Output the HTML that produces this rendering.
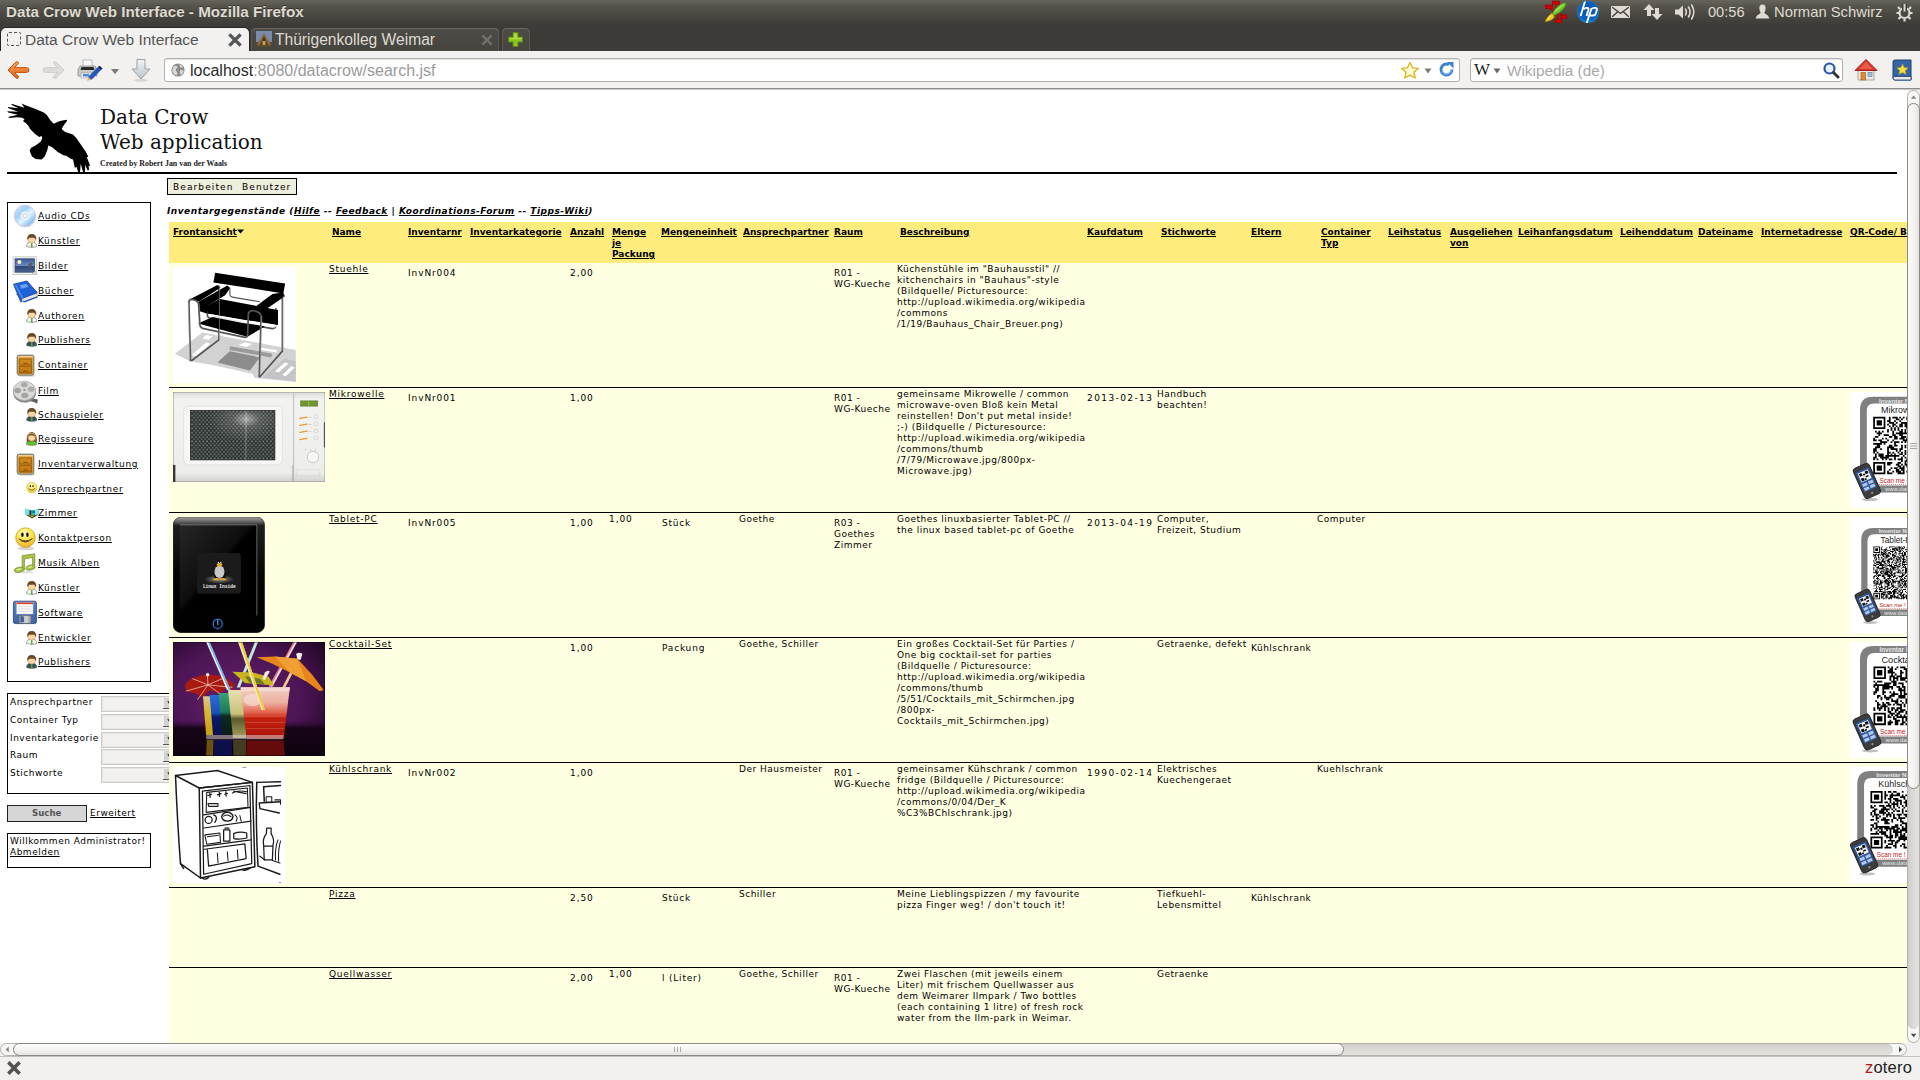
<!DOCTYPE html>
<html lang="de"><head><meta charset="utf-8"><title>Data Crow Web Interface - Mozilla Firefox</title>
<style>
html,body{margin:0;padding:0}
body{width:1920px;height:1080px;overflow:hidden;position:relative;background:#fff;font-family:"DejaVu Sans","Liberation Sans",sans-serif}
.a{position:absolute;white-space:nowrap}
.ui{font-family:"Liberation Sans",sans-serif}
/* page text */
.t{position:absolute;white-space:nowrap;font-size:9px;line-height:11px;letter-spacing:.5px;color:#000}
.h{position:absolute;white-space:nowrap;font-size:9px;line-height:11px;font-weight:bold;color:#000;text-decoration:underline}
.u{text-decoration:underline}
.ln{position:absolute;left:169px;width:1738px;height:1px;background:#000}
svg{position:absolute;display:block;overflow:hidden}
#all{position:absolute;left:0;top:0;width:1920px;height:1080px;overflow:hidden}
</style></head><body><div id="all">
<!-- ===== window chrome ===== -->
<div class="a" style="left:0;top:0;width:1920px;height:51px;background:linear-gradient(#67655b 0,#56544c 6px,#47463f 16px,#3d3c38 25px,#3c3b37 27px,#3c3b37 51px)"></div>
<div class="a ui" style="left:6px;top:3px;font-size:15.2px;line-height:18px;font-weight:bold;color:#dfdbd2;text-shadow:0 -1px 0 rgba(0,0,0,.4)">Data Crow Web Interface - Mozilla Firefox</div>
<!-- tray -->
<svg style="left:1543px;top:0" width="27" height="24" viewBox="0 0 27 24">
 <g stroke="#c80000" stroke-width="1.6" fill="none"><path d="M12.9 4 V12.4 M6.5 8.5 L14 12.4 L19.5 15 M14 12.4 L15.5 19.5"/></g>
 <g fill="#d80000" stroke="#a00000" stroke-width=".7"><rect x="9.3" y="1.1" width="7.1" height="3.1"/><rect x="2.4" y="5.1" width="6.9" height="3.5"/><rect x="17.9" y="15" width="5.8" height="3.5"/><rect x="12.3" y="19.3" width="6.4" height="3.4"/></g>
 <ellipse cx="16.3" cy="9" rx="9" ry="2.9" transform="rotate(-41.5 16.3 9)" fill="#6cc22c" stroke="#3c7a14" stroke-width=".7"/>
 <ellipse cx="16" cy="8.2" rx="7" ry="1.2" transform="rotate(-41.5 16 8.2)" fill="#a4e45c" opacity=".8"/>
 <path d="M8.6 13.2 Q11.2 14.4 11.4 17 Q9.5 20.6 2 21.8 Q3.4 17.2 8.6 13.2Z" fill="#f2c818" stroke="#a8800c" stroke-width=".6"/>
 <path d="M7.5 15.5 L4.5 20" stroke="#fff3a8" stroke-width=".9"/>
</svg>
<svg style="left:1576px;top:0" width="24" height="24" viewBox="0 0 24 24">
 <defs><radialGradient id="hpg" cx=".5" cy=".45" r=".6"><stop offset="0" stop-color="#0a4fb0"/><stop offset=".7" stop-color="#0a62c0"/><stop offset="1" stop-color="#1a9ae8"/></radialGradient><clipPath id="hpc"><circle cx="12" cy="12" r="10.9"/></clipPath></defs>
 <circle cx="12" cy="12" r="10.9" fill="url(#hpg)"/>
 <g clip-path="url(#hpc)" fill="none" stroke="#fff" stroke-width="1.9"><path d="M9.4 0 L4.6 16 M7.4 9.4 Q9 7.7 11.3 7.9 Q12.8 8.1 12.3 9.9 L10.5 16"/><path d="M15.6 8 L10.4 24 M15 9.4 Q16.6 7.7 19.3 7.9 Q21.3 8.1 20.8 10 L19.8 13.5 Q19.2 15.5 17.2 15.5 L13.6 15.5"/></g>
</svg>
<svg style="left:1610px;top:5px" width="21" height="14" viewBox="0 0 21 14"><rect x="1" y="1" width="19" height="12" rx="1" fill="#dfdbd2"/><path d="M2.2 2.2 L10.5 8.4 L18.8 2.2 M2.2 11.8 L8 6.6 M18.8 11.8 L13 6.6" stroke="#3c3b37" stroke-width="1.3" fill="none"/></svg>
<svg style="left:1643px;top:3px" width="20" height="18" viewBox="0 0 20 18"><path d="M6 1 L11.5 7 H8 V13 H4 V7 H0.5Z M14 17 L8.5 11 H12 V5 H16 V11 H19.5Z" fill="#dfdbd2"/></svg>
<svg style="left:1674px;top:3px" width="23" height="18" viewBox="0 0 23 18"><path d="M1 6.5 H4.5 L9 2.5 V15.5 L4.5 11.5 H1Z" fill="#dfdbd2"/><path d="M11.5 6 Q13.2 9 11.5 12 M14.5 4 Q17.6 9 14.5 14 M17.6 2 Q22 9 17.6 16" stroke="#dfdbd2" stroke-width="1.5" fill="none" stroke-linecap="round"/></svg>
<div class="a ui" style="left:1708px;top:3px;font-size:14.6px;line-height:18px;color:#dfdbd2">00:56</div>
<svg style="left:1755px;top:4px" width="15" height="15" viewBox="0 0 15 15"><path d="M7.5 0.5 C10 .5 11 2.6 10.6 5 C10.3 7 9.6 8 9.3 8.8 C10 10.4 13.6 10.6 14.4 14.5 H0.6 C1.4 10.6 5 10.4 5.7 8.8 C5.4 8 4.7 7 4.4 5 C4 2.6 5 .5 7.5 .5Z" fill="#dfdbd2"/></svg>
<div class="a ui" style="left:1774px;top:3px;font-size:14.8px;line-height:18px;color:#dfdbd2">Norman Schwirz</div>
<svg style="left:1895px;top:3px" width="19" height="19" viewBox="0 0 19 19"><g stroke="#dfdbd2" fill="none"><circle cx="9.5" cy="10" r="5" stroke-width="2.2"/><path d="M9.5 1.2 V8" stroke="#3c3b37" stroke-width="5"/><path d="M9.5 1 V8.5" stroke-width="2"/><path d="M3 4 L5 6 M16 4 L14 6 M1.5 10 H4 M17.5 10 H15 M3.5 16 L5.5 14 M15.5 16 L13.5 14 M9.5 18.5 V16" stroke-width="2.2"/></g></svg>

<!-- tabs -->
<div class="a" style="left:1px;top:28px;width:248px;height:24px;background:#f2f1f0;border-radius:5px 5px 0 0;box-shadow:0 0 0 1px rgba(0,0,0,.35)"></div>
<div class="a" style="left:7px;top:32px;width:12px;height:12px;border:1px dashed #555;border-radius:2px"></div>
<div class="a ui" style="left:25px;top:31px;font-size:15.5px;line-height:18px;color:#555">Data Crow Web Interface</div>
<svg style="left:228px;top:33px" width="14" height="14" viewBox="0 0 14 14"><path d="M2.6 2.6 L11.4 11.4 M11.4 2.6 L2.6 11.4" stroke="#555" stroke-width="3.4" stroke-linecap="square"/></svg>
<div class="a" style="left:251px;top:28px;width:248px;height:23px;background:linear-gradient(#4d4c47,#45443f);border-radius:5px 5px 0 0;box-shadow:inset 0 1px 0 #6a6863,inset 1px 0 0 #5c5a55,inset -1px 0 0 #5c5a55"></div>
<svg style="left:256px;top:31px" width="16" height="16" viewBox="0 0 16 16"><rect width="16" height="16" fill="#7a8cae"/><rect y="11" width="16" height="5" fill="#5a4a30"/><path d="M1 14 L8 1.5 L15 14Z" fill="#8a6a3a"/><path d="M4 14 L8 5 L12 14Z" fill="#4a3520"/><rect x="6.5" y="10" width="3" height="4" fill="#c8a050"/></svg>
<div class="a ui" style="left:275px;top:31px;font-size:15.6px;line-height:18px;color:#dfdbd2">Thürigenkolleg Weimar</div>
<svg style="left:480px;top:33px" width="14" height="14" viewBox="0 0 14 14"><path d="M3 3 L11 11 M11 3 L3 11" stroke="#75736d" stroke-width="2.4" stroke-linecap="round"/></svg>
<div class="a" style="left:502px;top:28px;width:28px;height:23px;background:linear-gradient(#4d4c47,#45443f);border-radius:5px 5px 0 0;box-shadow:inset 0 1px 0 #6a6863,inset 1px 0 0 #5c5a55,inset -1px 0 0 #5c5a55"></div>
<svg style="left:507px;top:31px" width="17" height="17" viewBox="0 0 17 17"><path d="M6 1.5 H11 V6 H15.5 V11 H11 V15.5 H6 V11 H1.5 V6 H6Z" fill="#8fc321" stroke="#5c8a10" stroke-width="1"/><path d="M7 2.5 H10 V7 H14.5 V8.2 H2.5 V7 H7Z" fill="#b6e04a" opacity=".8"/></svg>

<!-- nav bar -->
<div class="a" style="left:0;top:51px;width:1920px;height:37px;background:#f2f1f0"></div>
<div class="a" style="left:0;top:88px;width:1920px;height:1px;background:#8f8d89"></div>
<div class="a" style="left:0;top:89px;width:1920px;height:1px;background:#c9c7c4"></div>
<!-- back -->
<svg style="left:6px;top:60px" width="24" height="20" viewBox="0 0 24 20"><defs><linearGradient id="bk" x1="0" y1="0" x2="0" y2="1"><stop offset="0" stop-color="#f6a65c"/><stop offset="1" stop-color="#e2601a"/></linearGradient></defs><path d="M2 10 L10 2 Q11.8 1 12.6 2.6 L12 4 L8.6 7.6 H20.5 Q23 7.8 23 10 Q23 12.2 20.5 12.4 H8.6 L12 16 L12.6 17.4 Q11.8 19 10 18Z" fill="url(#bk)" stroke="#c4500f" stroke-width="1" stroke-linejoin="round"/></svg>
<svg style="left:42px;top:60px" width="24" height="20" viewBox="0 0 24 20"><path d="M22 10 L14 2 Q12.2 1 11.4 2.6 L12 4 L15.4 7.6 H3.5 Q1 7.8 1 10 Q1 12.2 3.5 12.4 H15.4 L12 16 L11.4 17.4 Q12.2 19 14 18Z" fill="#dedcd8" stroke="#cfcdc8" stroke-width="1" stroke-linejoin="round"/></svg>
<!-- printer + pencil -->
<svg style="left:77px;top:58px" width="26" height="24" viewBox="0 0 26 24">
 <path d="M6 2 H15 V9 H6Z" fill="#fafafa" stroke="#aaa" stroke-width=".8"/>
 <path d="M3 8 H18 L20 12 V18 H1 V12Z" fill="#c9c9c6" stroke="#8a8a88" stroke-width=".8"/>
 <path d="M4.5 9 H16.5 L17.5 12 H3.5Z" fill="#2a2a2a"/>
 <rect x="4" y="15" width="13" height="5" fill="#eee" stroke="#999" stroke-width=".6"/>
 <rect x="6" y="16" width="6" height="2.5" fill="#4a8ad8"/>
 <path d="M22.5 8 L25 10.5 L14 21.5 L11.5 19Z" fill="#2456c8" stroke="#143a8a" stroke-width=".8"/>
 <path d="M11.5 19 L14 21.5 L10 23Z" fill="#e8b070"/><path d="M22.5 8 L25 10.5 L24 11.5 L21.5 9Z" fill="#222"/>
</svg>
<svg style="left:110px;top:68px" width="10" height="7" viewBox="0 0 10 7"><path d="M1 1 H9 L5 6.2Z" fill="#7a7a78"/></svg>
<svg style="left:130px;top:58px" width="22" height="24" viewBox="0 0 22 24"><defs><linearGradient id="dn" x1="0" y1="0" x2="0" y2="1"><stop offset="0" stop-color="#f4f6f7"/><stop offset="1" stop-color="#b9c2c8"/></linearGradient></defs><ellipse cx="11" cy="22.3" rx="7" ry="1.4" fill="#000" opacity=".12"/><path d="M7 1.5 H15 V11 H20 L11 21 L2 11 H7Z" fill="url(#dn)" stroke="#9aa0a4" stroke-width="1" stroke-linejoin="round"/></svg>
<!-- url bar -->
<div class="a" style="left:164px;top:58px;width:1294px;height:22px;background:#fff;border:1px solid #b4b0aa;border-radius:3px;box-shadow:inset 0 1px 1px rgba(0,0,0,.12)"></div>
<svg style="left:170px;top:62px" width="16" height="16" viewBox="0 0 16 16"><circle cx="8" cy="8" r="6.6" fill="#8e8e8c"/><path d="M3 5 Q5 3 7 4 Q8 6 6 7 Q5 9 7 10 Q8 12 6.5 13.5 Q3 12 2.2 9Z M9.5 2.2 Q12 3 13 5 Q11 6 10 5Z M10 8 Q12 7.5 13.8 9 Q13 12 11 13 Q9.5 11 10 8Z" fill="#d8d8d6"/></svg>
<div class="a ui" style="left:190px;top:61px;font-size:16px;line-height:20px;color:#9a9a9a"><span style="color:#2a2a2a">localhost</span>:8080/datacrow/search.jsf</div>
<svg style="left:1400px;top:61px" width="20" height="18" viewBox="0 0 20 18"><path d="M10 1.5 L12.5 6.8 L18.3 7.4 L14 11.3 L15.2 17 L10 14.1 L4.8 17 L6 11.3 L1.7 7.4 L7.5 6.8Z" fill="#fffbd6" stroke="#d8b41c" stroke-width="1.3" stroke-linejoin="round"/></svg>
<svg style="left:1424px;top:68px" width="8" height="6" viewBox="0 0 8 6"><path d="M.5 .5 H7.5 L4 5.5Z" fill="#7a7a78"/></svg>
<svg style="left:1438px;top:61px" width="17" height="17" viewBox="0 0 17 17"><path d="M14 8.5 A5.5 5.5 0 1 1 11 3.6" fill="none" stroke="#3b82d2" stroke-width="3"/><path d="M9 1 H15.5 V7.5Z" fill="#3b82d2"/><path d="M13.4 8.5 A4.9 4.9 0 0 1 4 10" fill="none" stroke="#7fb4ea" stroke-width="1.2"/></svg>
<!-- search bar -->
<div class="a" style="left:1470px;top:58px;width:371px;height:22px;background:#fff;border:1px solid #b4b0aa;border-radius:3px;box-shadow:inset 0 1px 1px rgba(0,0,0,.12)"></div>
<div class="a" style="left:1474px;top:60px;font-family:'Liberation Serif',serif;font-size:17px;line-height:20px;color:#222;letter-spacing:-1px">W</div>
<svg style="left:1493px;top:68px" width="8" height="6" viewBox="0 0 8 6"><path d="M.5 .5 H7.5 L4 5.5Z" fill="#6a6a68"/></svg>
<div class="a ui" style="left:1507px;top:61px;font-size:15.3px;line-height:20px;color:#a9a9a9">Wikipedia (de)</div>
<svg style="left:1822px;top:61px" width="18" height="18" viewBox="0 0 18 18"><circle cx="7.5" cy="7.5" r="5" fill="#e8f0fa" stroke="#2b55a8" stroke-width="2.2"/><path d="M11.5 11.5 L16 16" stroke="#333" stroke-width="3" stroke-linecap="round"/></svg>
<!-- home -->
<svg style="left:1854px;top:58px" width="24" height="24" viewBox="0 0 24 24"><path d="M4 12 H20 V22 H4Z" fill="#eceae6" stroke="#9a9894" stroke-width=".8"/><path d="M12 1.5 L23 12.5 H1Z" fill="#d8382a" stroke="#a01e14" stroke-width="1" stroke-linejoin="round"/><path d="M12 4 L19 11 H5Z" fill="#ef6a52" opacity=".7"/><rect x="7" y="14.5" width="4.5" height="7.5" fill="#e08a2a" stroke="#9a5a10" stroke-width=".6"/><rect x="14" y="14.5" width="4" height="4" fill="#9ec2e8" stroke="#5a7a9a" stroke-width=".6"/></svg>
<svg style="left:1891px;top:59px" width="22" height="23" viewBox="0 0 22 23"><path d="M2 3 Q2 1 4 1 H20 V21 H4 Q2 21 2 19Z" fill="#3465a4" stroke="#1f3f70" stroke-width="1"/><path d="M2 19 Q2 17.5 4 17.5 H20 V21 H4 Q2 21 2 19Z" fill="#e8e8e8" stroke="#1f3f70" stroke-width=".8"/><path d="M11.5 5 L13.2 8.6 L17.2 9 L14.2 11.6 L15.1 15.5 L11.5 13.4 L7.9 15.5 L8.8 11.6 L5.8 9 L9.8 8.6Z" fill="#f8e040" stroke="#b89a10" stroke-width=".6"/></svg>
<!-- ===== page ===== -->
<svg style="left:0;top:98px" width="100" height="74" viewBox="0 0 1350 999"><path d="M290 75 L345 98 L480 150 L590 195 L630 225 L680 300 L725 348 L800 315 L860 300 L905 293 L905 312 L865 360 L832 420 L880 458 L985 492 L1030 540 L1100 640 L1160 730 L1192 792 L1172 800 L1216 912 L1196 920 L1202 972 L1180 976 L1152 900 L1146 1000 L1120 996 L1090 888 L1080 1000 L1052 996 L1036 930 L1010 942 L986 830 L960 822 L900 782 L850 770 L780 730 L700 662 L652 640 L640 700 L604 790 L560 830 L480 822 L432 790 L400 712 L420 672 L480 640 L548 590 L572 540 L560 514 L530 526 L470 482 L410 422 L380 372 L352 342 L310 312 L332 286 L300 266 L230 260 L130 270 L108 256 L240 225 L110 196 L98 180 L245 185 L110 136 L108 120 L250 140 L150 92 L165 82 L330 130Z" fill="#000"/></svg>

<div class="a" style="left:100px;top:105px;font-family:'DejaVu Serif','Liberation Serif',serif;font-size:20px;line-height:25.4px;color:#111">Data Crow<br>Web application</div>
<div class="a" style="left:100px;top:159px;font-family:'Liberation Serif',serif;font-weight:bold;font-size:7.9px;line-height:10px;color:#222">Created by Robert Jan van der Waals</div>
<div class="a" style="left:7px;top:172px;width:1890px;height:2px;background:#000"></div>
<div class="a" style="left:167px;top:178px;width:128px;height:15px;background:#eeeedd;border:1px solid #000"></div>
<div class="t" style="left:173px;top:182px;letter-spacing:1.1px;font-size:9px">Bearbeiten</div>
<div class="t" style="left:242px;top:182px;letter-spacing:1.1px;font-size:9px">Benutzer</div>
<div class="a" style="left:7px;top:202px;width:142px;height:478px;border:1px solid #000;background:#fff"></div>
<svg style="left:13px;top:204px" width="24" height="24" viewBox="0 0 24 24"><defs><linearGradient id="cdg" x1="0" y1="0" x2="1" y2="1"><stop offset="0" stop-color="#d8ecfb"/><stop offset=".35" stop-color="#9fd0f6"/><stop offset=".55" stop-color="#e8f5fe"/><stop offset=".8" stop-color="#8cc4f2"/><stop offset="1" stop-color="#c4e2fa"/></linearGradient></defs><ellipse cx="12.3" cy="13.2" rx="10.6" ry="10.4" fill="#000" opacity=".12"/><circle cx="12" cy="11.8" r="10.6" fill="url(#cdg)" stroke="#c9bfd8" stroke-width=".7"/><circle cx="12" cy="11.8" r="4.3" fill="#f4f9fd" stroke="#dbe6ee" stroke-width=".6"/><rect x="10" y="9.8" width="4" height="4" rx="1.1" fill="#fff" stroke="#bcbcbc" stroke-width=".8"/></svg>
<div class="t u" style="left:38px;top:211px;letter-spacing:.66px">Audio CDs</div>
<svg style="left:25.5px;top:233.5px" width="11.5" height="14" viewBox="0 0 11.5 14"><path d="M.5 12.6 C.5 9.6 2.3 8.4 4.2 8.2 H7.3 C9.2 8.4 11 9.6 11 12.6 Q5.75 14.4 .5 12.6Z" fill="#f4f4f4" stroke="#6e6e6e" stroke-width=".6"/><path d="M5.15 8.8 H6.35 L6.6 13.2 H4.9Z" fill="#4caf28"/><ellipse cx="5.75" cy="5.1" rx="3.75" ry="4" fill="#fcd6a4" stroke="#c48a50" stroke-width=".5"/><path d="M1.7 5.4 C1.2 2 3.1 .3 5.75 .3 C8.4 .3 10.3 2 9.8 5.4 L9.1 3.9 Q7.6 3.1 5.75 3.5 Q3.9 3.1 2.4 3.9Z" fill="#6b4a22" stroke="#4a3214" stroke-width=".5"/></svg>
<div class="t u" style="left:38px;top:236px;letter-spacing:.66px">Künstler</div>
<svg style="left:12px;top:256px" width="26" height="20" viewBox="0 0 26 20"><defs><linearGradient id="img1" x1="0" y1="0" x2="0" y2="1"><stop offset="0" stop-color="#3a5a96"/><stop offset=".5" stop-color="#6a8ac0"/><stop offset=".55" stop-color="#2e4472"/><stop offset="1" stop-color="#4a6490"/></linearGradient></defs><rect x="1" y=".8" width="23.6" height="17.6" fill="#f2f2f0" stroke="#c4c4c0" stroke-width=".8"/><rect x="3" y="2.8" width="19.6" height="13.4" fill="url(#img1)" stroke="#26365a" stroke-width=".6"/><circle cx="7.4" cy="6" r="2" fill="#fbfbc8"/><path d="M15 11 L18.5 6.2 L20.5 7.2 L18.6 11.8Z" fill="#555a66"/><path d="M19.6 18.4 L24.6 14.2 V18.4Z" fill="#dadad6" stroke="#b4b4b0" stroke-width=".5"/></svg>
<div class="t u" style="left:38px;top:261px;letter-spacing:.66px">Bilder</div>
<svg style="left:12px;top:280px" width="27" height="23" viewBox="0 0 27 23"><path d="M4 14 L12 21.5 L25.5 16.5 L25 13 L11 18Z" fill="#e8e4dc" stroke="#8a8a86" stroke-width=".6"/><path d="M9 21.8 L12.3 22.6 L25.8 17.6 L25.5 16.3 L12 21.3Z" fill="#1a50c0"/><path d="M1.5 4.2 L15 1 L25.3 12.6 L10.6 18.2 Q8.8 19.6 9.6 21.8 L8.6 21.6 Z" fill="#1f62d8" stroke="#0f3fa0" stroke-width=".8" stroke-linejoin="round"/><path d="M2.4 4.8 L4.2 4.4 L11.5 18.2 L10 19Z" fill="#4d8af0"/><path d="M7.5 5.4 L14 3.8 L16.6 6.8 L9.6 8.8Z" fill="#6aa2f4"/></svg>
<div class="t u" style="left:38px;top:286px;letter-spacing:.66px">Bücher</div>
<svg style="left:25.5px;top:308.5px" width="11.5" height="14" viewBox="0 0 11.5 14"><path d="M.5 12.6 C.5 9.6 2.3 8.4 4.2 8.2 H7.3 C9.2 8.4 11 9.6 11 12.6 Q5.75 14.4 .5 12.6Z" fill="#f4f4f4" stroke="#6e6e6e" stroke-width=".6"/><path d="M5.15 8.8 H6.35 L6.6 13.2 H4.9Z" fill="#4caf28"/><ellipse cx="5.75" cy="5.1" rx="3.75" ry="4" fill="#fcd6a4" stroke="#c48a50" stroke-width=".5"/><path d="M1.7 5.4 C1.2 2 3.1 .3 5.75 .3 C8.4 .3 10.3 2 9.8 5.4 L9.1 3.9 Q7.6 3.1 5.75 3.5 Q3.9 3.1 2.4 3.9Z" fill="#6b4a22" stroke="#4a3214" stroke-width=".5"/></svg>
<div class="t u" style="left:38px;top:311px;letter-spacing:.66px">Authoren</div>
<svg style="left:25.5px;top:332.5px" width="11.5" height="14" viewBox="0 0 11.5 14"><path d="M.5 12.6 C.5 9.6 2.3 8.4 4.2 8.2 H7.3 C9.2 8.4 11 9.6 11 12.6 Q5.75 14.4 .5 12.6Z" fill="#3c4a5a" stroke="#6e6e6e" stroke-width=".6"/><path d="M5.15 8.8 H6.35 L6.6 13.2 H4.9Z" fill="#4caf28"/><ellipse cx="5.75" cy="5.1" rx="3.75" ry="4" fill="#fcd6a4" stroke="#c48a50" stroke-width=".5"/><path d="M1.7 5.4 C1.2 2 3.1 .3 5.75 .3 C8.4 .3 10.3 2 9.8 5.4 L9.1 3.9 Q7.6 3.1 5.75 3.5 Q3.9 3.1 2.4 3.9Z" fill="#6b4a22" stroke="#4a3214" stroke-width=".5"/></svg>
<div class="t u" style="left:38px;top:335px;letter-spacing:.66px">Publishers</div>
<svg style="left:16px;top:354px" width="20" height="23" viewBox="0 0 20 23"><defs><linearGradient id="drw368" x1="0" y1="0" x2="0" y2="1"><stop offset="0" stop-color="#f0c070"/><stop offset=".12" stop-color="#d18a1e"/><stop offset="1" stop-color="#bd7510"/></linearGradient></defs><ellipse cx="10.5" cy="21.6" rx="9" ry="1.2" fill="#000" opacity=".18"/><rect x="1.2" y="1.2" width="16.6" height="19.8" rx="1.8" fill="#e8dcb8" stroke="#5a5238" stroke-width=".9"/><rect x="2.3" y="2.6" width="14.4" height="17.4" rx=".8" fill="url(#drw368)"/><rect x="3.6" y="5" width="11.8" height="6" fill="none" stroke="#9a5c08" stroke-width=".8"/><rect x="3.6" y="12.6" width="11.8" height="6" fill="none" stroke="#9a5c08" stroke-width=".8"/><path d="M7.3 10 Q9.5 8.2 11.7 10 M7.3 17.6 Q9.5 15.8 11.7 17.6" stroke="#7a4604" stroke-width=".9" fill="none"/></svg>
<div class="t u" style="left:38px;top:360px;letter-spacing:.66px">Container</div>
<svg style="left:12px;top:380px" width="27" height="24" viewBox="0 0 27 24"><path d="M14 20 Q20 18 25.8 19.4 L25.2 23.8 Q20 19.6 14 22.4Z" fill="#5e5e5c"/><ellipse cx="12.6" cy="12.4" rx="11.4" ry="10.4" fill="#8c8c8a"/><ellipse cx="12.4" cy="10.8" rx="11.2" ry="9.6" fill="#d9dad6" stroke="#a3a4a0" stroke-width=".7"/><ellipse cx="12.2" cy="4.8" rx="3.4" ry="2.5" fill="#a9aaa6"/><ellipse cx="5.6" cy="10.4" rx="3.4" ry="2.7" fill="#a3a4a0"/><ellipse cx="19" cy="9.2" rx="3.3" ry="2.6" fill="#adaeaa"/><ellipse cx="12.8" cy="15.4" rx="3.6" ry="2.7" fill="#a3a4a0"/><ellipse cx="12.4" cy="10" rx="1.3" ry="1" fill="#8a8a88"/></svg>
<div class="t u" style="left:38px;top:386px;letter-spacing:.66px">Film</div>
<svg style="left:25.5px;top:407.5px" width="11.5" height="14" viewBox="0 0 11.5 14"><path d="M.5 12.6 C.5 9.6 2.3 8.4 4.2 8.2 H7.3 C9.2 8.4 11 9.6 11 12.6 Q5.75 14.4 .5 12.6Z" fill="#3c4a5a" stroke="#6e6e6e" stroke-width=".6"/><path d="M5.15 8.8 H6.35 L6.6 13.2 H4.9Z" fill="#4caf28"/><ellipse cx="5.75" cy="5.1" rx="3.75" ry="4" fill="#fcd6a4" stroke="#c48a50" stroke-width=".5"/><path d="M1.7 5.4 C1.2 2 3.1 .3 5.75 .3 C8.4 .3 10.3 2 9.8 5.4 L9.1 3.9 Q7.6 3.1 5.75 3.5 Q3.9 3.1 2.4 3.9Z" fill="#6b4a22" stroke="#4a3214" stroke-width=".5"/></svg>
<div class="t u" style="left:38px;top:410px;letter-spacing:.66px">Schauspieler</div>
<svg style="left:25.5px;top:431.5px" width="11.5" height="14" viewBox="0 0 11.5 14"><path d="M.5 12.6 C.5 9.6 2.3 8.4 4.2 8.2 H7.3 C9.2 8.4 11 9.6 11 12.6 Q5.75 14.4 .5 12.6Z" fill="#58c428" stroke="#6e6e6e" stroke-width=".6"/><path d="M5.15 8.8 H6.35 L6.6 13.2 H4.9Z" fill="#58c428"/><path d="M1.2 10 C.4 3.6 2.6 .4 5.75 .4 C8.9 .4 11.1 3.6 10.3 10 L8.6 9 L2.9 9Z" fill="#7a5426" stroke="#4a3214" stroke-width=".5"/><ellipse cx="5.75" cy="5.1" rx="3.75" ry="4" fill="#fcd6a4" stroke="#c48a50" stroke-width=".5"/><path d="M2.2 5.2 C2.4 2.6 4 1.5 5.75 1.5 C7.5 1.5 9.1 2.6 9.3 5.2 C8.4 3.7 7 3.4 5.75 3.4 C4.5 3.4 3.1 3.7 2.2 5.2Z" fill="#7a5426"/></svg>
<div class="t u" style="left:38px;top:434px;letter-spacing:.66px">Regisseure</div>
<svg style="left:16px;top:453px" width="20" height="23" viewBox="0 0 20 23"><defs><linearGradient id="drw467" x1="0" y1="0" x2="0" y2="1"><stop offset="0" stop-color="#f0c070"/><stop offset=".12" stop-color="#d18a1e"/><stop offset="1" stop-color="#bd7510"/></linearGradient></defs><ellipse cx="10.5" cy="21.6" rx="9" ry="1.2" fill="#000" opacity=".18"/><rect x="1.2" y="1.2" width="16.6" height="19.8" rx="1.8" fill="#e8dcb8" stroke="#5a5238" stroke-width=".9"/><rect x="2.3" y="2.6" width="14.4" height="17.4" rx=".8" fill="url(#drw467)"/><rect x="3.6" y="5" width="11.8" height="6" fill="none" stroke="#9a5c08" stroke-width=".8"/><rect x="3.6" y="12.6" width="11.8" height="6" fill="none" stroke="#9a5c08" stroke-width=".8"/><path d="M7.3 10 Q9.5 8.2 11.7 10 M7.3 17.6 Q9.5 15.8 11.7 17.6" stroke="#7a4604" stroke-width=".9" fill="none"/></svg>
<div class="t u" style="left:38px;top:459px;letter-spacing:.66px">Inventarverwaltung</div>
<svg style="left:25.5px;top:482.4px" width="12" height="12" viewBox="0 0 12 12"><defs><radialGradient id="sms" cx=".45" cy=".3" r=".75"><stop offset="0" stop-color="#fffdc8"/><stop offset=".6" stop-color="#fbe858"/><stop offset="1" stop-color="#f0c23a"/></radialGradient></defs><circle cx="5.8" cy="5.6" r="5.1" fill="url(#sms)" stroke="#cdb02a" stroke-width=".6"/><ellipse cx="4.3" cy="4.2" rx=".7" ry="1.1" fill="#222"/><ellipse cx="7" cy="4.2" rx=".7" ry="1.1" fill="#222"/><path d="M2.6 6.4 Q5.8 10 9 6.3" fill="none" stroke="#5a4a1a" stroke-width=".9"/></svg>
<div class="t u" style="left:38px;top:484px;letter-spacing:.66px">Ansprechpartner</div>
<svg style="left:24.5px;top:508px" width="14" height="11" viewBox="0 0 14 11"><path d="M.4 .6 L4 2 H10 L13.6 .6 V6.6 L10 7 H4 L.4 6.6Z" fill="#2ab4b8"/><path d="M.4 .6 L4 2 V7 L.4 6.6Z" fill="#7adfe0"/><path d="M13.6 .6 L10 2 V7 L13.6 6.6Z" fill="#8ae6e6"/><rect x="4.6" y="2.6" width="1.6" height="4.2" fill="#5a1a1a"/><rect x="7.6" y="3" width="2" height="2" fill="#16686a"/><path d="M.8 6.8 L4 7 H10 L13.2 6.8 L7 10.6Z" fill="#4a4a1e"/><path d="M4.4 7.6 H9.6 L7 9.6Z" fill="#b4a83a"/></svg>
<div class="t u" style="left:38px;top:508px;letter-spacing:.66px">Zimmer</div>
<svg style="left:14px;top:526px" width="24" height="26" viewBox="0 0 24 26"><defs><radialGradient id="smg" cx=".45" cy=".28" r=".75"><stop offset="0" stop-color="#fffcc0"/><stop offset=".5" stop-color="#fbe64a"/><stop offset="1" stop-color="#f2a52a"/></radialGradient></defs><ellipse cx="11.8" cy="22.4" rx="8.6" ry="1.8" fill="#000" opacity=".16"/><circle cx="11.5" cy="11.6" r="9.8" fill="url(#smg)" stroke="#c2a41c" stroke-width=".8"/><ellipse cx="8.4" cy="8.8" rx="1.25" ry="2.2" fill="#111"/><ellipse cx="13.4" cy="8.8" rx="1.25" ry="2.2" fill="#111"/><path d="M4.8 12.8 Q11 19.6 18.4 12.6 Q11.4 17 4.8 12.8Z" fill="#5a4a1a" stroke="#5a4a1a" stroke-width=".8" stroke-linejoin="round"/></svg>
<div class="t u" style="left:38px;top:533px;letter-spacing:.66px">Kontaktperson</div>
<svg style="left:13px;top:553px" width="24" height="21" viewBox="0 0 24 21"><ellipse cx="12" cy="19.2" rx="9" ry="1.3" fill="#000" opacity=".12"/><path d="M9.2 2.6 L21.8 .8 V15 H19.6 V4.6 L11.4 5.8 V17 H9.2Z" fill="#a9c24a" stroke="#7e962c" stroke-width=".8" stroke-linejoin="round"/><ellipse cx="6.2" cy="16.8" rx="5" ry="2.5" transform="rotate(-12 6.2 16.8)" fill="#a9c24a" stroke="#7e962c" stroke-width=".8"/><ellipse cx="17.4" cy="14.6" rx="4.6" ry="2.4" transform="rotate(-12 17.4 14.6)" fill="#a9c24a" stroke="#7e962c" stroke-width=".8"/><ellipse cx="5.6" cy="16.4" rx="2.8" ry="1" transform="rotate(-12 5.6 16.4)" fill="#d4e48e"/><ellipse cx="16.8" cy="14.2" rx="2.6" ry=".9" transform="rotate(-12 16.8 14.2)" fill="#d4e48e"/></svg>
<div class="t u" style="left:38px;top:558px;letter-spacing:.66px">Musik Alben</div>
<svg style="left:25.5px;top:580.5px" width="11.5" height="14" viewBox="0 0 11.5 14"><path d="M.5 12.6 C.5 9.6 2.3 8.4 4.2 8.2 H7.3 C9.2 8.4 11 9.6 11 12.6 Q5.75 14.4 .5 12.6Z" fill="#f4f4f4" stroke="#6e6e6e" stroke-width=".6"/><path d="M5.15 8.8 H6.35 L6.6 13.2 H4.9Z" fill="#4caf28"/><ellipse cx="5.75" cy="5.1" rx="3.75" ry="4" fill="#fcd6a4" stroke="#c48a50" stroke-width=".5"/><path d="M1.7 5.4 C1.2 2 3.1 .3 5.75 .3 C8.4 .3 10.3 2 9.8 5.4 L9.1 3.9 Q7.6 3.1 5.75 3.5 Q3.9 3.1 2.4 3.9Z" fill="#6b4a22" stroke="#4a3214" stroke-width=".5"/></svg>
<div class="t u" style="left:38px;top:583px;letter-spacing:.66px">Künstler</div>
<svg style="left:12px;top:600px" width="26" height="25" viewBox="0 0 26 25"><defs><linearGradient id="flp" x1="0" y1="0" x2="0" y2="1"><stop offset="0" stop-color="#5b84c8"/><stop offset="1" stop-color="#3c62a8"/></linearGradient><linearGradient id="flm" x1="0" y1="0" x2="1" y2="0"><stop offset="0" stop-color="#8c8c8a"/><stop offset=".6" stop-color="#d6d6d4"/><stop offset="1" stop-color="#9a9a98"/></linearGradient></defs><rect x="1.4" y="1.2" width="23" height="22.4" rx="1.8" fill="url(#flp)" stroke="#2e4c86" stroke-width=".9"/><rect x="4.6" y="2.6" width="16.4" height="11.4" fill="#f8f8f8" stroke="#c4c8d0" stroke-width=".4"/><rect x="4.6" y="2.6" width="16.4" height="1.5" fill="#e03a24"/><path d="M6.2 6.6 H19.4 M6.2 9 H19.4 M6.2 11.4 H19.4" stroke="#d2d2d2" stroke-width=".6"/><rect x="7" y="15.6" width="12" height="7.6" fill="url(#flm)" stroke="#666" stroke-width=".5"/><rect x="9" y="16.8" width="2.6" height="5" fill="#3c62b4" stroke="#24408a" stroke-width=".5"/></svg>
<div class="t u" style="left:38px;top:608px;letter-spacing:.66px">Software</div>
<svg style="left:25.5px;top:630.5px" width="11.5" height="14" viewBox="0 0 11.5 14"><path d="M.5 12.6 C.5 9.6 2.3 8.4 4.2 8.2 H7.3 C9.2 8.4 11 9.6 11 12.6 Q5.75 14.4 .5 12.6Z" fill="#f4f4f4" stroke="#6e6e6e" stroke-width=".6"/><path d="M5.15 8.8 H6.35 L6.6 13.2 H4.9Z" fill="#4caf28"/><ellipse cx="5.75" cy="5.1" rx="3.75" ry="4" fill="#fcd6a4" stroke="#c48a50" stroke-width=".5"/><path d="M1.7 5.4 C1.2 2 3.1 .3 5.75 .3 C8.4 .3 10.3 2 9.8 5.4 L9.1 3.9 Q7.6 3.1 5.75 3.5 Q3.9 3.1 2.4 3.9Z" fill="#6b4a22" stroke="#4a3214" stroke-width=".5"/></svg>
<div class="t u" style="left:38px;top:633px;letter-spacing:.66px">Entwickler</div>
<svg style="left:25.5px;top:654.5px" width="11.5" height="14" viewBox="0 0 11.5 14"><path d="M.5 12.6 C.5 9.6 2.3 8.4 4.2 8.2 H7.3 C9.2 8.4 11 9.6 11 12.6 Q5.75 14.4 .5 12.6Z" fill="#3c4a5a" stroke="#6e6e6e" stroke-width=".6"/><path d="M5.15 8.8 H6.35 L6.6 13.2 H4.9Z" fill="#4caf28"/><ellipse cx="5.75" cy="5.1" rx="3.75" ry="4" fill="#fcd6a4" stroke="#c48a50" stroke-width=".5"/><path d="M1.7 5.4 C1.2 2 3.1 .3 5.75 .3 C8.4 .3 10.3 2 9.8 5.4 L9.1 3.9 Q7.6 3.1 5.75 3.5 Q3.9 3.1 2.4 3.9Z" fill="#6b4a22" stroke="#4a3214" stroke-width=".5"/></svg>
<div class="t u" style="left:38px;top:657px;letter-spacing:.66px">Publishers</div>
<div class="a" style="left:7px;top:693px;width:170px;height:99px;border:1px solid #000;background:#fff"></div>
<div class="t" style="left:10px;top:697px">Ansprechpartner</div>
<div class="a" style="left:101px;top:696px;width:75px;height:14px;border:1px solid #cdccc9;background:#f2f1ef;box-shadow:inset 0 0 0 1px #e6e5e2"></div>
<div class="a" style="left:164px;top:698px;width:10px;height:10px;background:#d2d2d2"></div>
<div class="a" style="left:163px;top:708px;width:10px;height:1px;background:#555"></div>
<svg style="left:166.5px;top:701px" width="5" height="4" viewBox="0 0 5 4"><path d="M.3 .3 H4.7 L2.5 3.6Z" fill="#111"/></svg>
<div class="t" style="left:10px;top:715px">Container Typ</div>
<div class="a" style="left:101px;top:714px;width:75px;height:14px;border:1px solid #cdccc9;background:#f2f1ef;box-shadow:inset 0 0 0 1px #e6e5e2"></div>
<div class="a" style="left:164px;top:716px;width:10px;height:10px;background:#d2d2d2"></div>
<div class="a" style="left:163px;top:726px;width:10px;height:1px;background:#555"></div>
<svg style="left:166.5px;top:719px" width="5" height="4" viewBox="0 0 5 4"><path d="M.3 .3 H4.7 L2.5 3.6Z" fill="#111"/></svg>
<div class="t" style="left:10px;top:733px">Inventarkategorie</div>
<div class="a" style="left:101px;top:732px;width:75px;height:14px;border:1px solid #cdccc9;background:#f2f1ef;box-shadow:inset 0 0 0 1px #e6e5e2"></div>
<div class="a" style="left:164px;top:734px;width:10px;height:10px;background:#d2d2d2"></div>
<div class="a" style="left:163px;top:744px;width:10px;height:1px;background:#555"></div>
<svg style="left:166.5px;top:737px" width="5" height="4" viewBox="0 0 5 4"><path d="M.3 .3 H4.7 L2.5 3.6Z" fill="#111"/></svg>
<div class="t" style="left:10px;top:750px">Raum</div>
<div class="a" style="left:101px;top:749px;width:75px;height:14px;border:1px solid #cdccc9;background:#f2f1ef;box-shadow:inset 0 0 0 1px #e6e5e2"></div>
<div class="a" style="left:164px;top:751px;width:10px;height:10px;background:#d2d2d2"></div>
<div class="a" style="left:163px;top:761px;width:10px;height:1px;background:#555"></div>
<svg style="left:166.5px;top:754px" width="5" height="4" viewBox="0 0 5 4"><path d="M.3 .3 H4.7 L2.5 3.6Z" fill="#111"/></svg>
<div class="t" style="left:10px;top:768px">Stichworte</div>
<div class="a" style="left:101px;top:767px;width:75px;height:14px;border:1px solid #cdccc9;background:#f2f1ef;box-shadow:inset 0 0 0 1px #e6e5e2"></div>
<div class="a" style="left:164px;top:769px;width:10px;height:10px;background:#d2d2d2"></div>
<div class="a" style="left:163px;top:779px;width:10px;height:1px;background:#555"></div>
<svg style="left:166.5px;top:772px" width="5" height="4" viewBox="0 0 5 4"><path d="M.3 .3 H4.7 L2.5 3.6Z" fill="#111"/></svg>
<div class="a" style="left:7px;top:805px;width:78px;height:15px;border:1px solid #222;background:#d6d6d6"></div>
<div class="t" style="left:32px;top:808px;font-weight:bold;color:#555;letter-spacing:0;font-size:8.6px">Suche</div>
<div class="t u" style="left:90px;top:808px">Erweitert</div>
<div class="a" style="left:7px;top:833px;width:142px;height:33px;border:1px solid #000;background:#fff"></div>
<div class="t" style="left:10px;top:836px">Willkommen Administrator!</div>
<div class="t u" style="left:10px;top:847px">Abmelden</div>
<div class="a" style="left:167px;top:206px;font-size:9px;line-height:11px;font-weight:bold;font-style:italic;letter-spacing:.5px">Inventargegenstände (<span class="u">Hilfe</span> -- <span class="u">Feedback</span> | <span class="u">Koordinations-Forum</span> -- <span class="u">Tipps-Wiki</span>)</div>
<div class="a" style="left:169px;top:222px;width:1738px;height:41px;background:#feec7d"></div>
<div class="a" style="left:169px;top:263px;width:1738px;height:780px;background:#ffffe2"></div>
<div class="ln" style="top:387px"></div>
<div class="ln" style="top:512px"></div>
<div class="ln" style="top:637px"></div>
<div class="ln" style="top:762px"></div>
<div class="ln" style="top:887px"></div>
<div class="ln" style="top:967px"></div>
<div class="h" style="left:173px;top:227px">Frontansicht</div>
<div class="h" style="left:332px;top:227px">Name</div>
<div class="h" style="left:408px;top:227px">Inventarnr</div>
<div class="h" style="left:470px;top:227px">Inventarkategorie</div>
<div class="h" style="left:570px;top:227px">Anzahl</div>
<div class="h" style="left:612px;top:227px">Menge<br>je<br>Packung</div>
<div class="h" style="left:661px;top:227px">Mengeneinheit</div>
<div class="h" style="left:743px;top:227px">Ansprechpartner</div>
<div class="h" style="left:834px;top:227px">Raum</div>
<div class="h" style="left:900px;top:227px">Beschreibung</div>
<div class="h" style="left:1087px;top:227px">Kaufdatum</div>
<div class="h" style="left:1161px;top:227px">Stichworte</div>
<div class="h" style="left:1251px;top:227px">Eltern</div>
<div class="h" style="left:1321px;top:227px">Container<br>Typ</div>
<div class="h" style="left:1388px;top:227px">Leihstatus</div>
<div class="h" style="left:1450px;top:227px">Ausgeliehen<br>von</div>
<div class="h" style="left:1518px;top:227px">Leihanfangsdatum</div>
<div class="h" style="left:1620px;top:227px">Leihenddatum</div>
<div class="h" style="left:1698px;top:227px">Dateiname</div>
<div class="h" style="left:1761px;top:227px">Internetadresse</div>
<div class="h" style="left:1850px;top:227px">QR-Code/ Barcode</div>
<svg style="left:237px;top:229px" width="7" height="5" viewBox="0 0 7 5"><path d="M0 .5 H7 L3.5 4.5Z" fill="#000"/></svg>
<div class="t u" style="left:329px;top:264px;letter-spacing:.75px">Stuehle</div>
<div class="t" style="left:408px;top:268px;letter-spacing:.9px">InvNr004</div>
<div class="t" style="left:570px;top:268px;letter-spacing:.9px">2,00</div>
<div class="t" style="left:834px;top:268px">R01 -<br>WG-Kueche</div>
<div class="t" style="left:897px;top:264px">Küchenstühle im "Bauhausstil" //<br>kitchenchairs in "Bauhaus"-style<br>(Bildquelle/ Picturesource:<br>http://upload.wikimedia.org/wikipedia<br>/commons<br>/1/19/Bauhaus_Chair_Breuer.png)</div>
<div class="t u" style="left:329px;top:389px;letter-spacing:.75px">Mikrowelle</div>
<div class="t" style="left:408px;top:393px;letter-spacing:.9px">InvNr001</div>
<div class="t" style="left:570px;top:393px;letter-spacing:.9px">1,00</div>
<div class="t" style="left:834px;top:393px">R01 -<br>WG-Kueche</div>
<div class="t" style="left:897px;top:389px">gemeinsame Mikrowelle / common<br>microwave-oven Bloß kein Metal<br>reinstellen! Don't put metal inside!<br>;-) (Bildquelle / Picturesource:<br>http://upload.wikimedia.org/wikipedia<br>/commons/thumb<br>/7/79/Microwave.jpg/800px-<br>Microwave.jpg)</div>
<div class="t" style="left:1087px;top:393px;letter-spacing:1.4px">2013-02-13</div>
<div class="t" style="left:1157px;top:389px">Handbuch<br>beachten!</div>
<div class="t u" style="left:329px;top:514px;letter-spacing:.75px">Tablet-PC</div>
<div class="t" style="left:408px;top:518px;letter-spacing:.9px">InvNr005</div>
<div class="t" style="left:570px;top:518px;letter-spacing:.9px">1,00</div>
<div class="t" style="left:609px;top:514px;letter-spacing:.9px">1,00</div>
<div class="t" style="left:662px;top:518px;letter-spacing:.8px">Stück</div>
<div class="t" style="left:739px;top:514px">Goethe</div>
<div class="t" style="left:834px;top:518px">R03 -<br>Goethes<br>Zimmer</div>
<div class="t" style="left:897px;top:514px">Goethes linuxbasierter Tablet-PC //<br>the linux based tablet-pc of Goethe</div>
<div class="t" style="left:1087px;top:518px;letter-spacing:1.4px">2013-04-19</div>
<div class="t" style="left:1157px;top:514px">Computer,<br>Freizeit, Studium</div>
<div class="t" style="left:1317px;top:514px">Computer</div>
<div class="t u" style="left:329px;top:639px;letter-spacing:.75px">Cocktail-Set</div>
<div class="t" style="left:570px;top:643px;letter-spacing:.9px">1,00</div>
<div class="t" style="left:662px;top:643px;letter-spacing:.8px">Packung</div>
<div class="t" style="left:739px;top:639px">Goethe, Schiller</div>
<div class="t" style="left:897px;top:639px">Ein großes Cocktail-Set für Parties /<br>One big cocktail-set for parties<br>(Bildquelle / Picturesource:<br>http://upload.wikimedia.org/wikipedia<br>/commons/thumb<br>/5/51/Cocktails_mit_Schirmchen.jpg<br>/800px-<br>Cocktails_mit_Schirmchen.jpg)</div>
<div class="t" style="left:1157px;top:639px">Getraenke, defekt</div>
<div class="t" style="left:1251px;top:643px">Kühlschrank</div>
<div class="t u" style="left:329px;top:764px;letter-spacing:.75px">Kühlschrank</div>
<div class="t" style="left:408px;top:768px;letter-spacing:.9px">InvNr002</div>
<div class="t" style="left:570px;top:768px;letter-spacing:.9px">1,00</div>
<div class="t" style="left:739px;top:764px">Der Hausmeister</div>
<div class="t" style="left:834px;top:768px">R01 -<br>WG-Kueche</div>
<div class="t" style="left:897px;top:764px">gemeinsamer Kühschrank / common<br>fridge (Bildquelle / Picturesource:<br>http://upload.wikimedia.org/wikipedia<br>/commons/0/04/Der_K<br>%C3%BChlschrank.jpg)</div>
<div class="t" style="left:1087px;top:768px;letter-spacing:1.4px">1990-02-14</div>
<div class="t" style="left:1157px;top:764px">Elektrisches<br>Kuechengeraet</div>
<div class="t" style="left:1317px;top:764px">Kuehlschrank</div>
<div class="t u" style="left:329px;top:889px;letter-spacing:.75px">Pizza</div>
<div class="t" style="left:570px;top:893px;letter-spacing:.9px">2,50</div>
<div class="t" style="left:662px;top:893px;letter-spacing:.8px">Stück</div>
<div class="t" style="left:739px;top:889px">Schiller</div>
<div class="t" style="left:897px;top:889px">Meine Lieblingspizzen / my favourite<br>pizza Finger weg! / don't touch it!</div>
<div class="t" style="left:1157px;top:889px">Tiefkuehl-<br>Lebensmittel</div>
<div class="t" style="left:1251px;top:893px">Kühlschrank</div>
<div class="t u" style="left:329px;top:969px;letter-spacing:.75px">Quellwasser</div>
<div class="t" style="left:570px;top:973px;letter-spacing:.9px">2,00</div>
<div class="t" style="left:609px;top:969px;letter-spacing:.9px">1,00</div>
<div class="t" style="left:662px;top:973px;letter-spacing:.8px">l (Liter)</div>
<div class="t" style="left:739px;top:969px">Goethe, Schiller</div>
<div class="t" style="left:834px;top:973px">R01 -<br>WG-Kueche</div>
<div class="t" style="left:897px;top:969px">Zwei Flaschen (mit jeweils einem<br>Liter) mit frischem Quellwasser aus<br>dem Weimarer Ilmpark / Two bottles<br>(each containing 1 litre) of fresh rock<br>water from the Ilm-park in Weimar.</div>
<div class="t" style="left:1157px;top:969px">Getraenke</div>
<svg style="left:173px;top:267px" width="123" height="116" viewBox="65 97 984 928">
<rect x="65" y="97" width="984" height="928" fill="#fff"/>
<!-- floor shadows -->
<path d="M80 790 L300 620 L1047 760 L1047 1015 L720 985 L700 950 L380 880 L200 850Z" fill="#d2d2d2"/>
<path d="M420 860 L520 770 L760 820 L680 925Z" fill="#8c8c8c"/>
<path d="M520 730 L860 790 L850 820 L515 760Z" fill="#9a9a9a"/>
<path d="M780 980 L960 830 L1047 850 L1047 1015Z" fill="#c4c4c4"/>
<g fill="#fff"><path d="M215 800 L330 700 L365 708 L250 810Z"/><path d="M330 640 L380 650 L350 680 L300 668Z"/><path d="M590 720 L640 700 L700 712 L650 736Z"/><path d="M880 930 L960 860 L990 868 L910 940Z"/><path d="M940 960 L1010 890 L1040 898 L965 972Z"/><path d="M760 740 L900 762 L890 780 L750 756Z"/></g>
<!-- back legs / frame -->
<g fill="none" stroke="#555" stroke-width="13" stroke-linecap="round" stroke-linejoin="round">
<path d="M432 250 V680 L215 845"/>
<path d="M940 320 V770 L760 975"/>
<path d="M340 420 V480 Q340 500 360 505 L860 590 Q885 590 888 565 V430"/>
</g>
<!-- back rest -->
<path d="M402 143 L962 228 L948 308 L388 220Z" fill="#000"/>
<!-- arm straps -->
<path d="M205 352 L420 240 L445 262 L272 372Z" fill="#000"/>
<path d="M272 372 L500 245 L520 262 L520 300 L350 400 L340 470 L280 450Z" fill="#000"/>
<path d="M860 312 L945 300 L960 330 L800 440 L770 470 L690 440Z" fill="#000"/>
<!-- seat -->
<path d="M345 400 L440 352 L860 432 L905 440 L905 560 L640 520 L345 470Z" fill="#000"/>
<path d="M520 268 L860 312 L745 380 L470 340Z" fill="#fff"/>
<path d="M520 262 V320 Q522 335 540 338 L760 375" fill="none" stroke="#555" stroke-width="9"/>
<!-- lower sling -->
<path d="M265 548 L400 488 L800 572 L660 655Z" fill="#000"/>
<path d="M350 470 L640 522 L905 562 L880 580 L620 545 L350 490Z" fill="#fff" opacity=".9"/>
<!-- front frame -->
<g fill="none" stroke="#555" stroke-width="14" stroke-linecap="round" stroke-linejoin="round">
<path d="M205 845 L192 380 Q192 356 215 356 Q262 362 270 392 L280 560 Q285 585 310 590 L640 660 Q660 660 662 640 L668 470 Q675 445 710 447 Q765 455 770 490 L755 975"/>
</g>
<g fill="none" stroke="#bdbdbd" stroke-width="4" stroke-linecap="round"><path d="M199 830 L187 385"/><path d="M762 960 L776 495"/><path d="M436 260 V670"/><path d="M946 330 V760"/></g>
</svg>

<svg style="left:173px;top:392px" width="152" height="90" viewBox="65 57 1216 720">
<defs>
<linearGradient id="mwb" x1="0" y1="0" x2="0" y2="1"><stop offset="0" stop-color="#dcdcda"/><stop offset=".08" stop-color="#f2f2f0"/><stop offset=".9" stop-color="#ededeb"/><stop offset="1" stop-color="#d2d2d2"/></linearGradient>
<pattern id="mwm" width="30" height="34" patternUnits="userSpaceOnUse"><rect width="30" height="34" fill="#2c302f"/><ellipse cx="8" cy="9" rx="6.5" ry="7.5" fill="#848c8a"/><ellipse cx="23" cy="26" rx="6.5" ry="7.5" fill="#747c7a"/></pattern>
<radialGradient id="mwh" cx=".66" cy=".18" r=".45"><stop offset="0" stop-color="#fff" stop-opacity=".55"/><stop offset=".35" stop-color="#fff" stop-opacity=".15"/><stop offset="1" stop-color="#fff" stop-opacity="0"/></radialGradient>
</defs>
<rect x="65" y="57" width="1216" height="720" fill="#8e8e96"/>
<rect x="69" y="60" width="1209" height="712" rx="8" fill="url(#mwb)"/>
<path d="M65 640 H84 V777 H65Z" fill="#3a3236"/>
<!-- door frame inner bevel -->
<rect x="150" y="170" width="790" height="470" rx="40" fill="#f7f7f5" stroke="#e2e2df" stroke-width="8"/>
<rect x="205" y="205" width="675" height="395" fill="url(#mwm)"/>
<rect x="205" y="205" width="675" height="395" fill="url(#mwh)"/>
<rect x="205" y="205" width="675" height="395" fill="none" stroke="#191c1b" stroke-width="6"/>
<path d="M640 210 L660 210 L652 600 L640 600Z" fill="#fff" opacity=".18"/>
<!-- control panel -->
<path d="M1030 62 V770" stroke="#b9b9b6" stroke-width="7"/>
<path d="M1022 640 V770" stroke="#8a8a88" stroke-width="4"/>
<rect x="1085" y="128" width="138" height="42" fill="#6f9630" stroke="#4e6e1c" stroke-width="4"/>
<path d="M1150 130 V168" stroke="#a9cc66" stroke-width="5"/>
<g stroke="#e89a2a" stroke-width="10" stroke-linecap="round"><path d="M1080 268 L1136 258"/><path d="M1080 324 L1136 314"/><path d="M1080 380 L1136 370"/><path d="M1080 438 L1136 428"/></g>
<g stroke="#c9c9c6" stroke-width="5"><path d="M1140 262 H1180 M1140 318 H1180 M1140 372 H1180"/></g>
<g fill="none" stroke="#cfcfcc" stroke-width="6"><circle cx="1210" cy="255" r="16"/><circle cx="1210" cy="312" r="16"/><circle cx="1210" cy="368" r="16"/><circle cx="1210" cy="425" r="16"/></g>
<circle cx="1185" cy="577" r="46" fill="#f7f7f5" stroke="#c4c4c1" stroke-width="7"/>
<g fill="#bdbdb9"><circle cx="1125" cy="515" r="5"/><circle cx="1165" cy="520" r="5"/><circle cx="1205" cy="520" r="5"/></g>
<rect x="1050" y="680" width="190" height="50" fill="none" stroke="#d4d4d1" stroke-width="5"/>
<path d="M1276 300 V500" stroke="#3a3a55" stroke-width="8"/>
</svg>

<svg style="left:173px;top:517px" width="92" height="116" viewBox="65 57 736 928">
<defs>
<linearGradient id="tbb" x1="0" y1="0" x2="0" y2="1"><stop offset="0" stop-color="#8a8a8a"/><stop offset=".035" stop-color="#5a5a5a"/><stop offset=".075" stop-color="#1e1e1e"/><stop offset=".5" stop-color="#050505"/><stop offset="1" stop-color="#000"/></linearGradient>
<linearGradient id="tbs" x1="0" y1="0" x2="1" y2="1"><stop offset="0" stop-color="#262626"/><stop offset=".45" stop-color="#0e0e0e"/><stop offset=".5" stop-color="#000"/><stop offset="1" stop-color="#000"/></linearGradient>
<radialGradient id="tbg" cx=".5" cy=".5" r=".5"><stop offset="0" stop-color="#fff" stop-opacity=".55"/><stop offset="1" stop-color="#fff" stop-opacity="0"/></radialGradient>
<linearGradient id="tbt" x1="0" y1="0" x2="0" y2="1"><stop offset="0" stop-color="#9a9a9a"/><stop offset="1" stop-color="#3a3a3a"/></linearGradient>
</defs>
<rect x="66" y="58" width="732" height="924" rx="62" fill="url(#tbb)" stroke="#050505" stroke-width="4"/>
<path d="M128 62 H735 Q770 64 790 100 L740 118 H122 L74 100 Q95 64 128 62Z" fill="url(#tbt)"/>
<rect x="120" y="118" width="618" height="728" fill="url(#tbs)"/>
<path d="M736 120 L640 360 L620 846 H736Z" fill="#000" opacity=".6"/>
<path d="M120 120 H736 V846" fill="none" stroke="#a4a4a4" stroke-width="5"/>
<rect x="258" y="345" width="350" height="325" rx="26" fill="#1b1b1b"/>
<ellipse cx="435" cy="555" rx="120" ry="36" fill="url(#tbg)"/>
<!-- tux -->
<path d="M420 408 Q438 398 456 410 L470 440 Q500 500 488 545 L395 545 Q382 500 405 440Z" fill="#141414"/>
<ellipse cx="437" cy="495" rx="40" ry="50" fill="#c9c9c9"/>
<path d="M412 432 Q437 418 462 432 Q455 455 437 458 Q419 455 412 432Z" fill="#e8a820"/>
<circle cx="428" cy="420" r="6" fill="#eee"/><circle cx="447" cy="420" r="6" fill="#eee"/>
<path d="M380 560 Q395 540 430 548 L432 562Z M495 560 Q480 540 445 548 L443 562Z" fill="#e8a820"/>
<text x="435" y="622" font-family="Liberation Mono,monospace" font-weight="bold" font-size="40" fill="#f2f2f2" text-anchor="middle" textLength="262" lengthAdjust="spacingAndGlyphs">Linux Inside</text>
<circle cx="423" cy="912" r="36" fill="none" stroke="#3a82e0" stroke-width="9"/>
<circle cx="423" cy="912" r="44" fill="none" stroke="#14284a" stroke-width="6"/>
<path d="M423 880 V915" stroke="#000" stroke-width="24"/><path d="M423 884 V918" stroke="#4a94f0" stroke-width="10" stroke-linecap="round"/>
<path d="M796 200 V240" stroke="#444" stroke-width="6"/>
</svg>

<svg style="left:173px;top:642px" width="152" height="114" viewBox="65 57 1216 912">
<defs>
<radialGradient id="ckb" cx=".42" cy=".48" r=".78"><stop offset="0" stop-color="#64206a"/><stop offset=".55" stop-color="#4c1554"/><stop offset=".85" stop-color="#2c0a32"/><stop offset="1" stop-color="#18051c"/></radialGradient>
<linearGradient id="ckf" x1="0" y1="0" x2="0" y2="1"><stop offset="0" stop-color="#2a0a30" stop-opacity="0"/><stop offset=".2" stop-color="#170518"/><stop offset="1" stop-color="#0e030f"/></linearGradient>
<linearGradient id="ckr" x1="0" y1="0" x2="0" y2="1"><stop offset="0" stop-color="#f2cfc0"/><stop offset=".3" stop-color="#eeb0a0"/><stop offset=".5" stop-color="#e0604a"/><stop offset=".6" stop-color="#c4200e"/><stop offset="1" stop-color="#a81408"/></linearGradient>
<linearGradient id="cky" x1="0" y1="0" x2="0" y2="1"><stop offset="0" stop-color="#e8e0b0"/><stop offset=".5" stop-color="#c8c078"/><stop offset=".6" stop-color="#5a5a28"/><stop offset="1" stop-color="#a8a060"/></linearGradient>
<linearGradient id="ckg" x1="0" y1="0" x2="0" y2="1"><stop offset="0" stop-color="#3aa07a"/><stop offset=".45" stop-color="#1e7a58"/><stop offset=".55" stop-color="#0c2a20"/><stop offset="1" stop-color="#0a1a18"/></linearGradient>
<linearGradient id="ckbl" x1="0" y1="0" x2="0" y2="1"><stop offset="0" stop-color="#2a6ad8"/><stop offset=".45" stop-color="#1a50c0"/><stop offset=".55" stop-color="#0a1a70"/><stop offset="1" stop-color="#081050"/></linearGradient>
<linearGradient id="ckyl" x1="0" y1="0" x2="0" y2="1"><stop offset="0" stop-color="#d8c890"/><stop offset=".4" stop-color="#d8b830"/><stop offset="1" stop-color="#c8a010"/></linearGradient>
</defs>
<rect x="65" y="57" width="1216" height="912" fill="url(#ckb)"/>
<rect x="65" y="690" width="1216" height="279" fill="url(#ckf)"/>
<!-- straws back -->
<path d="M720 57 L745 57 L600 420 L575 420Z" fill="#bfe8d8"/>
<path d="M1030 57 L1058 57 L860 415 L832 410Z" fill="#f0d8d8"/>
<path d="M1030 57 L1040 57 L842 412 L832 410Z" fill="#e06a6a"/>
<!-- orange umbrella -->
<path d="M735 178 L880 172 L1060 190 L1180 320 L1270 440 L1240 450 L1130 370 L1000 300 L860 230Z" fill="#e8841c"/>
<path d="M880 172 L1060 190 L1130 370 L1000 300Z" fill="#f0a030"/>
<path d="M1050 150 Q1075 135 1100 150 L1085 200 L1060 195Z" fill="#f4f0e8"/>
<path d="M1000 300 L1020 310 L770 790 L755 780Z" fill="#f0c890"/>
<!-- yellow umbrella -->
<path d="M540 295 L700 300 L830 335 L875 405 L760 395 L640 385Z" fill="#c8b41e"/>
<path d="M640 330 L760 350 L800 395 L680 385Z" fill="#6a7a28"/>
<path d="M800 300 Q820 280 840 292 L800 360 L780 352Z" fill="#f0ece0"/>
<!-- red umbrella -->
<path d="M160 400 Q200 330 340 318 Q480 315 560 400 L540 440 L480 430 L440 470 L360 440 L300 500 L250 470 L170 450Z" fill="#a81a10"/>
<g stroke="#f0c8b8" stroke-width="6" fill="none"><path d="M345 400 L170 450 M345 400 L260 520 M345 400 L440 470 M345 400 L540 420 M345 400 L340 320 M345 400 L220 350 M345 400 L470 345"/></g>
<circle cx="342" cy="318" r="14" fill="#f4ece4"/>
<!-- glasses -->
<path d="M305 490 H395 L385 800 H330Z" fill="url(#ckyl)"/>
<path d="M358 480 H470 L462 800 H385Z" fill="url(#ckbl)"/>
<path d="M430 465 H545 L540 800 H455Z" fill="url(#ckg)"/>
<path d="M505 440 H660 L650 825 H545Z" fill="url(#cky)"/>
<path d="M605 418 H1000 L950 830 H655Z" fill="url(#ckr)"/>
<path d="M605 418 H1000 L996 450 H609Z" fill="#f4e0d8" opacity=".7"/>
<ellipse cx="700" cy="520" rx="70" ry="50" fill="#f8e8e0" opacity=".55"/>
<g stroke="#e8a090" stroke-width="5" opacity=".5"><path d="M640 650 H965 M645 700 H960 M650 750 H955"/></g>
<path d="M330 800 H950 L948 835 H332Z" fill="#d8d0d0" opacity=".55"/>
<!-- front straws -->
<path d="M330 57 L358 57 L525 440 L497 440Z" fill="#e8f0f8"/>
<path d="M344 57 L358 57 L525 440 L511 440Z" fill="#6ab0e8"/>
<path d="M585 57 L618 57 L800 600 L775 600Z" fill="#f4ecc0"/>
<path d="M600 57 L618 57 L800 600 L785 600Z" fill="#e8d030"/>
<!-- reflections -->
<g opacity=".55"><path d="M335 840 H390 L385 967 H330Z" fill="#b89010"/><path d="M390 840 H540 L535 967 H392Z" fill="#0a1878"/><path d="M545 840 H650 L648 967 H548Z" fill="#6a6a30"/><path d="M655 845 H950 L960 967 H650Z" fill="#a81408"/></g>
<rect x="65" y="57" width="1216" height="912" fill="none" stroke="#0a0208" stroke-width="10" opacity=".5"/>
</svg>

<svg style="left:173px;top:767px" width="112" height="116" viewBox="65 57 896 928">
<rect x="65" y="57" width="896" height="928" fill="#fff"/>
<g fill="none" stroke="#1a1a1a" stroke-width="12" stroke-linecap="round" stroke-linejoin="round">
<!-- body -->
<path d="M85 125 L420 85 L700 180 L275 225 Z"/>
<path d="M85 125 Q100 500 125 830 L285 945 L275 225"/>
<path d="M275 225 L700 180 L720 855 L285 945"/>
<path d="M300 250 L680 205 L695 830 L310 915 Z" stroke-width="10"/>
<!-- shelves -->
<path d="M310 440 L685 380" stroke-width="10"/><path d="M312 545 L688 490" stroke-width="10"/>
<path d="M315 690 L690 640" stroke-width="10"/><path d="M318 715 L640 672 L650 790 L350 850 L340 720" stroke-width="10"/>
<path d="M335 260 L660 225 L665 380 L330 420Z" stroke-width="8.5"/>
<!-- freezer text / stars -->
<path d="M345 285 L375 275 M360 265 L362 300 M420 280 L450 270 M435 258 L437 292 M480 275 L500 268 M488 255 L490 290" stroke-width="10"/>
<path d="M540 265 Q580 240 655 255 M550 250 L650 270" stroke-width="8.5"/>
<path d="M345 350 H425 V372 H350Z" stroke-width="8.5"/>
<!-- items -->
<circle cx="350" cy="480" r="28" stroke-width="10"/><path d="M390 440 Q430 455 400 500" stroke-width="10"/>
<ellipse cx="500" cy="455" rx="45" ry="35" stroke-width="11"/><path d="M470 450 Q500 430 530 455 M560 440 Q590 460 570 490 M600 445 L610 490" stroke-width="8.5"/>
<path d="M470 560 H520 V650 H470Z M480 545 H512" stroke-width="10"/>
<path d="M550 590 Q600 570 655 585 V625 Q600 640 552 630Z" stroke-width="10"/>
<path d="M320 600 L440 585 L445 660 L335 675Z M340 615 L430 603" stroke-width="8.5"/>
<path d="M420 745 L425 820 M500 735 L505 805 M580 720 L585 790" stroke-width="8.5"/>
<!-- door -->
<path d="M735 180 L925 175"/><path d="M735 180 Q725 520 745 850 L920 915"/>
<path d="M790 215 L925 205 M790 215 L795 330"/>
<path d="M755 345 L925 335 M760 390 L915 425 M755 345 L760 390" stroke-width="11"/>
<path d="M810 295 H855 V340 H810Z M880 320 H925 V355" stroke-width="8.5"/>
<path d="M815 545 H850 V590 Q880 640 865 680 L860 800 H795 L790 680 Q780 630 812 590Z" stroke-width="10"/>
<path d="M795 690 H862" stroke-width="8.5"/>
<path d="M905 640 Q880 700 885 800 M925 650 Q905 720 910 810" stroke-width="8.5"/>
<path d="M760 770 L800 800 M860 805 L920 825" stroke-width="10"/>
<!-- feet -->
<path d="M300 945 Q320 965 350 940 M620 880 Q640 890 680 868 M125 830 L150 870" stroke-width="11"/>
</g>
<g fill="#444"><rect x="620" y="55" width="30" height="6"/><rect x="915" y="977" width="12" height="6"/></g>
</svg>

<svg style="left:1850px;top:392px" width="70" height="116" viewBox="0 0 70 116"><rect width="70" height="116" fill="#fff"/><g transform="translate(0 0) scale(1)"><path d="M10 18 Q10 4.8 23 4.8 H80 V11.6 H24 Q16.8 11.6 16.8 19 V87 Q16.8 93.5 24 93.5 H80 V100.4 H23 Q10 100.4 10 88Z" fill="#808080"/><text x="29" y="10.6" font-family="Liberation Sans,sans-serif" font-weight="bold" font-size="6.2" fill="#e8e8e8">Inventar Nr.</text><text x="31" y="21" font-family="Liberation Sans,sans-serif" font-size="9" fill="#222">Mikrowelle</text><g transform="translate(23.2 24.8) scale(1.742)"><path d="M0 0h7v1h-7zM9 0h1v1h-1zM11 0h3v1h-3zM15 0h1v1h-1zM17 0h1v1h-1zM19 0h3v1h-3zM23 0h1v1h-1zM26 0h7v1h-7zM0 1h1v1h-1zM6 1h1v1h-1zM9 1h1v1h-1zM13 1h2v1h-2zM16 1h1v1h-1zM19 1h1v1h-1zM23 1h1v1h-1zM26 1h1v1h-1zM32 1h1v1h-1zM0 2h1v1h-1zM2 2h3v1h-3zM6 2h1v1h-1zM8 2h2v1h-2zM12 2h1v1h-1zM15 2h1v1h-1zM20 2h4v1h-4zM26 2h1v1h-1zM28 2h3v1h-3zM32 2h1v1h-1zM0 3h1v1h-1zM2 3h3v1h-3zM6 3h1v1h-1zM9 3h3v1h-3zM13 3h1v1h-1zM16 3h4v1h-4zM21 3h1v1h-1zM23 3h1v1h-1zM26 3h1v1h-1zM28 3h3v1h-3zM32 3h1v1h-1zM0 4h1v1h-1zM2 4h3v1h-3zM6 4h1v1h-1zM8 4h1v1h-1zM11 4h2v1h-2zM15 4h2v1h-2zM18 4h3v1h-3zM23 4h2v1h-2zM26 4h1v1h-1zM28 4h3v1h-3zM32 4h1v1h-1zM0 5h1v1h-1zM6 5h1v1h-1zM9 5h1v1h-1zM11 5h1v1h-1zM13 5h1v1h-1zM15 5h2v1h-2zM18 5h3v1h-3zM22 5h2v1h-2zM26 5h1v1h-1zM32 5h1v1h-1zM0 6h7v1h-7zM10 6h1v1h-1zM12 6h1v1h-1zM14 6h1v1h-1zM19 6h3v1h-3zM23 6h1v1h-1zM26 6h7v1h-7zM8 7h1v1h-1zM10 7h1v1h-1zM12 7h1v1h-1zM14 7h1v1h-1zM16 7h1v1h-1zM18 7h1v1h-1zM20 7h1v1h-1zM22 7h1v1h-1zM24 7h1v1h-1zM1 8h1v1h-1zM3 8h1v1h-1zM5 8h1v1h-1zM8 8h1v1h-1zM11 8h1v1h-1zM15 8h2v1h-2zM18 8h1v1h-1zM21 8h1v1h-1zM24 8h1v1h-1zM28 8h1v1h-1zM32 8h1v1h-1zM2 9h3v1h-3zM11 9h1v1h-1zM13 9h8v1h-8zM23 9h4v1h-4zM28 9h2v1h-2zM31 9h2v1h-2zM3 10h1v1h-1zM6 10h3v1h-3zM11 10h2v1h-2zM15 10h2v1h-2zM20 10h2v1h-2zM24 10h1v1h-1zM28 10h5v1h-5zM1 11h2v1h-2zM9 11h2v1h-2zM12 11h2v1h-2zM16 11h3v1h-3zM23 11h3v1h-3zM28 11h1v1h-1zM31 11h1v1h-1zM0 12h1v1h-1zM5 12h1v1h-1zM7 12h1v1h-1zM12 12h2v1h-2zM15 12h3v1h-3zM19 12h3v1h-3zM30 12h2v1h-2zM0 13h2v1h-2zM3 13h2v1h-2zM8 13h1v1h-1zM11 13h1v1h-1zM17 13h5v1h-5zM25 13h1v1h-1zM27 13h2v1h-2zM30 13h1v1h-1zM4 14h4v1h-4zM10 14h1v1h-1zM12 14h3v1h-3zM16 14h1v1h-1zM18 14h1v1h-1zM21 14h2v1h-2zM25 14h2v1h-2zM30 14h1v1h-1zM0 15h5v1h-5zM6 15h1v1h-1zM12 15h1v1h-1zM22 15h1v1h-1zM24 15h2v1h-2zM30 15h3v1h-3zM2 16h2v1h-2zM9 16h2v1h-2zM12 16h2v1h-2zM16 16h1v1h-1zM18 16h1v1h-1zM21 16h1v1h-1zM23 16h1v1h-1zM26 16h1v1h-1zM28 16h1v1h-1zM32 16h1v1h-1zM1 17h3v1h-3zM8 17h4v1h-4zM16 17h1v1h-1zM18 17h1v1h-1zM20 17h1v1h-1zM22 17h2v1h-2zM26 17h1v1h-1zM28 17h1v1h-1zM32 17h1v1h-1zM0 18h2v1h-2zM4 18h1v1h-1zM8 18h1v1h-1zM10 18h4v1h-4zM15 18h2v1h-2zM20 18h1v1h-1zM22 18h1v1h-1zM27 18h1v1h-1zM29 18h1v1h-1zM32 18h1v1h-1zM0 19h2v1h-2zM8 19h1v1h-1zM13 19h1v1h-1zM15 19h1v1h-1zM18 19h1v1h-1zM20 19h1v1h-1zM22 19h1v1h-1zM24 19h1v1h-1zM28 19h5v1h-5zM0 20h1v1h-1zM2 20h1v1h-1zM8 20h2v1h-2zM11 20h1v1h-1zM14 20h1v1h-1zM16 20h1v1h-1zM18 20h1v1h-1zM20 20h1v1h-1zM22 20h3v1h-3zM26 20h3v1h-3zM31 20h2v1h-2zM1 21h1v1h-1zM3 21h3v1h-3zM8 21h1v1h-1zM10 21h1v1h-1zM12 21h1v1h-1zM15 21h2v1h-2zM18 21h1v1h-1zM20 21h1v1h-1zM25 21h4v1h-4zM30 21h2v1h-2zM1 22h1v1h-1zM3 22h3v1h-3zM7 22h8v1h-8zM17 22h1v1h-1zM23 22h1v1h-1zM25 22h1v1h-1zM27 22h2v1h-2zM30 22h1v1h-1zM32 22h1v1h-1zM0 23h2v1h-2zM4 23h5v1h-5zM12 23h1v1h-1zM16 23h1v1h-1zM18 23h1v1h-1zM21 23h3v1h-3zM25 23h1v1h-1zM31 23h1v1h-1zM0 24h1v1h-1zM2 24h1v1h-1zM5 24h1v1h-1zM7 24h1v1h-1zM9 24h2v1h-2zM12 24h1v1h-1zM14 24h3v1h-3zM19 24h3v1h-3zM23 24h3v1h-3zM27 24h6v1h-6zM16 25h1v1h-1zM18 25h3v1h-3zM22 25h1v1h-1zM25 25h1v1h-1zM28 25h1v1h-1zM0 26h7v1h-7zM8 26h3v1h-3zM14 26h2v1h-2zM18 26h1v1h-1zM20 26h2v1h-2zM24 26h3v1h-3zM30 26h3v1h-3zM0 27h1v1h-1zM6 27h1v1h-1zM8 27h2v1h-2zM13 27h2v1h-2zM16 27h1v1h-1zM18 27h2v1h-2zM22 27h2v1h-2zM25 27h1v1h-1zM28 27h2v1h-2zM0 28h1v1h-1zM2 28h3v1h-3zM6 28h1v1h-1zM14 28h2v1h-2zM17 28h1v1h-1zM19 28h1v1h-1zM21 28h2v1h-2zM24 28h1v1h-1zM26 28h1v1h-1zM28 28h2v1h-2zM0 29h1v1h-1zM2 29h3v1h-3zM6 29h1v1h-1zM10 29h1v1h-1zM12 29h2v1h-2zM15 29h3v1h-3zM22 29h1v1h-1zM25 29h2v1h-2zM29 29h4v1h-4zM0 30h1v1h-1zM2 30h3v1h-3zM6 30h1v1h-1zM9 30h1v1h-1zM13 30h2v1h-2zM16 30h2v1h-2zM22 30h1v1h-1zM25 30h3v1h-3zM30 30h3v1h-3zM0 31h1v1h-1zM6 31h1v1h-1zM8 31h1v1h-1zM11 31h1v1h-1zM13 31h3v1h-3zM17 31h1v1h-1zM19 31h2v1h-2zM26 31h3v1h-3zM30 31h1v1h-1zM32 31h1v1h-1zM0 32h7v1h-7zM8 32h3v1h-3zM14 32h4v1h-4zM20 32h1v1h-1zM23 32h1v1h-1zM25 32h1v1h-1zM29 32h1v1h-1zM31 32h2v1h-2z" fill="#000"/></g><text x="29.5" y="91" font-family="Liberation Sans,sans-serif" font-size="6.4" fill="#c01818">Scan me !</text><text x="35" y="99.2" font-family="Liberation Sans,sans-serif" font-size="6" fill="#e8e8e8">www.datacrow.net</text><path d="M29 92.5 H70" stroke="#e02020" stroke-width=".6" stroke-dasharray="1 1"/><ellipse cx="20" cy="107.5" rx="8" ry="1.6" fill="#000" opacity=".25"/><g transform="rotate(-24 17 90)"><rect x="8.6" y="72.5" width="17.4" height="33" rx="3" fill="#3c3c3c" stroke="#1e1e1e" stroke-width=".8"/><rect x="10.4" y="77" width="13.8" height="21.6" fill="#2c5aa8"/><rect x="11.8" y="78.6" width="11" height="9.6" fill="#f4f4f4"/><path d="M12.6 79.4h3v3h-3z M19 79.4h3v3h-3z M12.6 84.6h3v3h-3z M16.4 81h2v2h-2z M18 84h3v1.6h-3z M16 86h2v1.6h-2z" fill="#111"/><rect x="11.6" y="90" width="5" height="3" fill="#b8c8e0"/><rect x="18" y="90" width="5" height="3" fill="#b8c8e0"/><rect x="11.6" y="94.4" width="5" height="3" fill="#b8c8e0"/><rect x="18" y="94.4" width="5" height="3" fill="#b8c8e0"/><circle cx="17.3" cy="102" r="1.2" fill="#888"/></g></g></svg>
<svg style="left:1850px;top:517px" width="70" height="116" viewBox="0 0 70 116"><rect width="70" height="116" fill="#fff"/><g transform="translate(2.05 6.6) scale(0.92)"><path d="M10 18 Q10 4.8 23 4.8 H80 V11.6 H24 Q16.8 11.6 16.8 19 V87 Q16.8 93.5 24 93.5 H80 V100.4 H23 Q10 100.4 10 88Z" fill="#808080"/><text x="29" y="10.6" font-family="Liberation Sans,sans-serif" font-weight="bold" font-size="6.2" fill="#e8e8e8">Inventar Nr.</text><text x="31" y="21" font-family="Liberation Sans,sans-serif" font-size="9" fill="#222">Tablet-PC</text><g transform="translate(23.2 24.8) scale(1.009)"><path d="M0 0h7v1h-7zM9 0h1v1h-1zM17 0h6v1h-6zM24 0h1v1h-1zM26 0h3v1h-3zM30 0h1v1h-1zM32 0h2v1h-2zM36 0h1v1h-1zM38 0h1v1h-1zM40 0h1v1h-1zM43 0h5v1h-5zM50 0h7v1h-7zM0 1h1v1h-1zM6 1h1v1h-1zM8 1h1v1h-1zM14 1h1v1h-1zM17 1h1v1h-1zM23 1h1v1h-1zM25 1h1v1h-1zM27 1h3v1h-3zM31 1h1v1h-1zM33 1h1v1h-1zM36 1h1v1h-1zM40 1h2v1h-2zM45 1h1v1h-1zM50 1h1v1h-1zM56 1h1v1h-1zM0 2h1v1h-1zM2 2h3v1h-3zM6 2h1v1h-1zM8 2h1v1h-1zM13 2h1v1h-1zM20 2h6v1h-6zM27 2h2v1h-2zM30 2h3v1h-3zM37 2h1v1h-1zM40 2h3v1h-3zM44 2h1v1h-1zM46 2h3v1h-3zM50 2h1v1h-1zM52 2h3v1h-3zM56 2h1v1h-1zM0 3h1v1h-1zM2 3h3v1h-3zM6 3h1v1h-1zM8 3h2v1h-2zM11 3h4v1h-4zM18 3h1v1h-1zM20 3h3v1h-3zM24 3h3v1h-3zM28 3h1v1h-1zM30 3h1v1h-1zM34 3h4v1h-4zM39 3h2v1h-2zM50 3h1v1h-1zM52 3h3v1h-3zM56 3h1v1h-1zM0 4h1v1h-1zM2 4h3v1h-3zM6 4h1v1h-1zM10 4h1v1h-1zM12 4h2v1h-2zM15 4h3v1h-3zM22 4h2v1h-2zM25 4h2v1h-2zM28 4h2v1h-2zM31 4h1v1h-1zM37 4h1v1h-1zM39 4h1v1h-1zM44 4h1v1h-1zM46 4h2v1h-2zM50 4h1v1h-1zM52 4h3v1h-3zM56 4h1v1h-1zM0 5h1v1h-1zM6 5h1v1h-1zM8 5h1v1h-1zM11 5h2v1h-2zM14 5h1v1h-1zM18 5h4v1h-4zM23 5h1v1h-1zM27 5h3v1h-3zM32 5h1v1h-1zM35 5h3v1h-3zM39 5h1v1h-1zM41 5h2v1h-2zM44 5h1v1h-1zM46 5h1v1h-1zM48 5h1v1h-1zM50 5h1v1h-1zM56 5h1v1h-1zM0 6h7v1h-7zM8 6h3v1h-3zM12 6h2v1h-2zM16 6h2v1h-2zM20 6h1v1h-1zM23 6h2v1h-2zM28 6h1v1h-1zM31 6h1v1h-1zM33 6h2v1h-2zM37 6h2v1h-2zM41 6h1v1h-1zM44 6h3v1h-3zM48 6h1v1h-1zM50 6h7v1h-7zM8 7h1v1h-1zM10 7h3v1h-3zM14 7h1v1h-1zM16 7h3v1h-3zM22 7h1v1h-1zM24 7h1v1h-1zM27 7h5v1h-5zM33 7h2v1h-2zM38 7h1v1h-1zM41 7h1v1h-1zM43 7h2v1h-2zM46 7h1v1h-1zM48 7h1v1h-1zM0 8h1v1h-1zM2 8h2v1h-2zM5 8h2v1h-2zM8 8h6v1h-6zM15 8h1v1h-1zM18 8h1v1h-1zM20 8h2v1h-2zM24 8h1v1h-1zM27 8h1v1h-1zM31 8h1v1h-1zM33 8h2v1h-2zM37 8h1v1h-1zM39 8h1v1h-1zM41 8h3v1h-3zM46 8h1v1h-1zM48 8h1v1h-1zM51 8h1v1h-1zM53 8h1v1h-1zM56 8h1v1h-1zM0 9h3v1h-3zM4 9h2v1h-2zM7 9h1v1h-1zM9 9h2v1h-2zM13 9h4v1h-4zM20 9h4v1h-4zM28 9h1v1h-1zM30 9h5v1h-5zM39 9h1v1h-1zM43 9h1v1h-1zM45 9h3v1h-3zM49 9h3v1h-3zM54 9h3v1h-3zM0 10h1v1h-1zM2 10h1v1h-1zM5 10h1v1h-1zM10 10h2v1h-2zM13 10h5v1h-5zM20 10h1v1h-1zM22 10h3v1h-3zM26 10h1v1h-1zM29 10h1v1h-1zM31 10h2v1h-2zM35 10h1v1h-1zM37 10h1v1h-1zM41 10h1v1h-1zM44 10h1v1h-1zM46 10h1v1h-1zM51 10h2v1h-2zM54 10h2v1h-2zM1 11h2v1h-2zM5 11h1v1h-1zM8 11h1v1h-1zM11 11h1v1h-1zM13 11h3v1h-3zM21 11h2v1h-2zM25 11h3v1h-3zM29 11h1v1h-1zM32 11h2v1h-2zM35 11h5v1h-5zM41 11h1v1h-1zM45 11h4v1h-4zM53 11h3v1h-3zM1 12h1v1h-1zM3 12h1v1h-1zM5 12h2v1h-2zM8 12h2v1h-2zM12 12h1v1h-1zM14 12h1v1h-1zM18 12h2v1h-2zM21 12h2v1h-2zM24 12h1v1h-1zM27 12h4v1h-4zM32 12h1v1h-1zM36 12h1v1h-1zM38 12h1v1h-1zM40 12h1v1h-1zM42 12h1v1h-1zM44 12h2v1h-2zM49 12h1v1h-1zM53 12h1v1h-1zM55 12h1v1h-1zM1 13h1v1h-1zM3 13h1v1h-1zM10 13h2v1h-2zM13 13h1v1h-1zM16 13h5v1h-5zM24 13h3v1h-3zM28 13h1v1h-1zM31 13h3v1h-3zM35 13h1v1h-1zM38 13h1v1h-1zM40 13h1v1h-1zM45 13h1v1h-1zM50 13h2v1h-2zM54 13h3v1h-3zM2 14h2v1h-2zM5 14h3v1h-3zM9 14h2v1h-2zM15 14h3v1h-3zM19 14h1v1h-1zM21 14h2v1h-2zM25 14h5v1h-5zM31 14h4v1h-4zM39 14h2v1h-2zM43 14h1v1h-1zM45 14h8v1h-8zM0 15h1v1h-1zM2 15h1v1h-1zM9 15h2v1h-2zM12 15h1v1h-1zM14 15h3v1h-3zM21 15h1v1h-1zM23 15h1v1h-1zM25 15h2v1h-2zM29 15h1v1h-1zM32 15h1v1h-1zM35 15h1v1h-1zM37 15h3v1h-3zM43 15h1v1h-1zM45 15h1v1h-1zM48 15h1v1h-1zM50 15h2v1h-2zM53 15h1v1h-1zM56 15h1v1h-1zM0 16h1v1h-1zM3 16h4v1h-4zM8 16h5v1h-5zM15 16h3v1h-3zM20 16h1v1h-1zM24 16h1v1h-1zM26 16h1v1h-1zM28 16h2v1h-2zM31 16h4v1h-4zM36 16h7v1h-7zM44 16h1v1h-1zM48 16h1v1h-1zM50 16h2v1h-2zM53 16h2v1h-2zM1 17h1v1h-1zM3 17h6v1h-6zM11 17h2v1h-2zM15 17h1v1h-1zM17 17h1v1h-1zM19 17h2v1h-2zM22 17h1v1h-1zM24 17h2v1h-2zM27 17h1v1h-1zM31 17h3v1h-3zM35 17h1v1h-1zM39 17h8v1h-8zM48 17h1v1h-1zM52 17h1v1h-1zM54 17h2v1h-2zM1 18h2v1h-2zM6 18h3v1h-3zM12 18h2v1h-2zM16 18h1v1h-1zM23 18h2v1h-2zM28 18h2v1h-2zM31 18h1v1h-1zM37 18h1v1h-1zM39 18h1v1h-1zM42 18h2v1h-2zM50 18h1v1h-1zM53 18h1v1h-1zM56 18h1v1h-1zM0 19h1v1h-1zM3 19h3v1h-3zM7 19h4v1h-4zM12 19h1v1h-1zM14 19h1v1h-1zM17 19h1v1h-1zM19 19h1v1h-1zM21 19h1v1h-1zM24 19h1v1h-1zM27 19h2v1h-2zM31 19h5v1h-5zM37 19h4v1h-4zM42 19h1v1h-1zM49 19h2v1h-2zM54 19h2v1h-2zM0 20h3v1h-3zM6 20h6v1h-6zM13 20h1v1h-1zM15 20h5v1h-5zM22 20h4v1h-4zM27 20h1v1h-1zM29 20h1v1h-1zM31 20h1v1h-1zM33 20h1v1h-1zM37 20h1v1h-1zM39 20h2v1h-2zM42 20h2v1h-2zM45 20h5v1h-5zM51 20h1v1h-1zM54 20h2v1h-2zM2 21h1v1h-1zM5 21h1v1h-1zM9 21h1v1h-1zM13 21h2v1h-2zM17 21h4v1h-4zM22 21h1v1h-1zM25 21h4v1h-4zM32 21h1v1h-1zM34 21h1v1h-1zM37 21h4v1h-4zM42 21h1v1h-1zM46 21h4v1h-4zM53 21h2v1h-2zM56 21h1v1h-1zM0 22h1v1h-1zM3 22h3v1h-3zM9 22h4v1h-4zM19 22h6v1h-6zM26 22h1v1h-1zM28 22h1v1h-1zM31 22h4v1h-4zM38 22h3v1h-3zM42 22h2v1h-2zM45 22h1v1h-1zM47 22h1v1h-1zM50 22h1v1h-1zM52 22h2v1h-2zM55 22h2v1h-2zM0 23h1v1h-1zM4 23h7v1h-7zM13 23h3v1h-3zM18 23h1v1h-1zM20 23h4v1h-4zM26 23h1v1h-1zM30 23h1v1h-1zM34 23h2v1h-2zM37 23h1v1h-1zM39 23h4v1h-4zM45 23h3v1h-3zM49 23h1v1h-1zM51 23h3v1h-3zM55 23h2v1h-2zM0 24h1v1h-1zM3 24h1v1h-1zM7 24h5v1h-5zM14 24h3v1h-3zM18 24h4v1h-4zM24 24h3v1h-3zM34 24h3v1h-3zM38 24h1v1h-1zM43 24h1v1h-1zM45 24h3v1h-3zM50 24h1v1h-1zM54 24h1v1h-1zM0 25h1v1h-1zM2 25h1v1h-1zM4 25h1v1h-1zM6 25h1v1h-1zM12 25h3v1h-3zM17 25h2v1h-2zM21 25h3v1h-3zM27 25h2v1h-2zM31 25h2v1h-2zM34 25h2v1h-2zM40 25h1v1h-1zM43 25h2v1h-2zM46 25h1v1h-1zM49 25h1v1h-1zM51 25h2v1h-2zM56 25h1v1h-1zM2 26h2v1h-2zM8 26h4v1h-4zM14 26h3v1h-3zM18 26h3v1h-3zM26 26h2v1h-2zM29 26h1v1h-1zM31 26h1v1h-1zM34 26h3v1h-3zM40 26h2v1h-2zM44 26h1v1h-1zM46 26h3v1h-3zM50 26h1v1h-1zM53 26h2v1h-2zM0 27h1v1h-1zM2 27h4v1h-4zM7 27h2v1h-2zM10 27h1v1h-1zM12 27h6v1h-6zM19 27h1v1h-1zM24 27h1v1h-1zM26 27h2v1h-2zM29 27h1v1h-1zM34 27h2v1h-2zM37 27h2v1h-2zM41 27h1v1h-1zM47 27h1v1h-1zM49 27h5v1h-5zM55 27h2v1h-2zM0 28h5v1h-5zM7 28h2v1h-2zM10 28h1v1h-1zM12 28h4v1h-4zM17 28h4v1h-4zM22 28h2v1h-2zM25 28h4v1h-4zM30 28h6v1h-6zM37 28h1v1h-1zM39 28h1v1h-1zM42 28h2v1h-2zM45 28h4v1h-4zM50 28h2v1h-2zM54 28h2v1h-2zM3 29h2v1h-2zM8 29h2v1h-2zM11 29h5v1h-5zM18 29h2v1h-2zM21 29h3v1h-3zM29 29h1v1h-1zM31 29h1v1h-1zM34 29h1v1h-1zM37 29h2v1h-2zM41 29h1v1h-1zM43 29h1v1h-1zM46 29h1v1h-1zM49 29h1v1h-1zM54 29h3v1h-3zM3 30h1v1h-1zM5 30h3v1h-3zM10 30h1v1h-1zM12 30h6v1h-6zM19 30h2v1h-2zM22 30h1v1h-1zM31 30h3v1h-3zM36 30h1v1h-1zM38 30h7v1h-7zM46 30h1v1h-1zM49 30h1v1h-1zM51 30h1v1h-1zM53 30h3v1h-3zM1 31h2v1h-2zM4 31h4v1h-4zM9 31h3v1h-3zM15 31h6v1h-6zM22 31h2v1h-2zM25 31h1v1h-1zM27 31h1v1h-1zM30 31h3v1h-3zM35 31h3v1h-3zM40 31h3v1h-3zM45 31h4v1h-4zM50 31h2v1h-2zM53 31h4v1h-4zM0 32h2v1h-2zM3 32h1v1h-1zM5 32h1v1h-1zM9 32h3v1h-3zM15 32h4v1h-4zM21 32h3v1h-3zM27 32h5v1h-5zM34 32h2v1h-2zM38 32h1v1h-1zM41 32h7v1h-7zM50 32h1v1h-1zM53 32h2v1h-2zM56 32h1v1h-1zM0 33h1v1h-1zM4 33h1v1h-1zM11 33h2v1h-2zM17 33h1v1h-1zM19 33h1v1h-1zM21 33h1v1h-1zM25 33h1v1h-1zM28 33h1v1h-1zM30 33h1v1h-1zM33 33h1v1h-1zM42 33h2v1h-2zM45 33h2v1h-2zM49 33h1v1h-1zM51 33h2v1h-2zM55 33h2v1h-2zM0 34h1v1h-1zM3 34h3v1h-3zM11 34h2v1h-2zM15 34h4v1h-4zM24 34h2v1h-2zM29 34h1v1h-1zM31 34h1v1h-1zM33 34h2v1h-2zM36 34h1v1h-1zM38 34h3v1h-3zM43 34h1v1h-1zM45 34h1v1h-1zM47 34h3v1h-3zM51 34h3v1h-3zM55 34h2v1h-2zM4 35h1v1h-1zM6 35h1v1h-1zM13 35h2v1h-2zM16 35h1v1h-1zM19 35h2v1h-2zM22 35h1v1h-1zM24 35h1v1h-1zM29 35h4v1h-4zM37 35h1v1h-1zM39 35h2v1h-2zM44 35h2v1h-2zM47 35h1v1h-1zM50 35h1v1h-1zM56 35h1v1h-1zM1 36h2v1h-2zM5 36h1v1h-1zM7 36h1v1h-1zM9 36h1v1h-1zM12 36h4v1h-4zM17 36h1v1h-1zM20 36h2v1h-2zM28 36h3v1h-3zM33 36h1v1h-1zM35 36h3v1h-3zM39 36h3v1h-3zM43 36h4v1h-4zM53 36h4v1h-4zM0 37h2v1h-2zM3 37h2v1h-2zM7 37h2v1h-2zM11 37h6v1h-6zM18 37h1v1h-1zM20 37h9v1h-9zM30 37h9v1h-9zM43 37h1v1h-1zM46 37h1v1h-1zM51 37h5v1h-5zM0 38h1v1h-1zM4 38h2v1h-2zM7 38h4v1h-4zM12 38h2v1h-2zM16 38h3v1h-3zM21 38h3v1h-3zM27 38h2v1h-2zM32 38h1v1h-1zM34 38h1v1h-1zM40 38h2v1h-2zM43 38h1v1h-1zM45 38h1v1h-1zM47 38h1v1h-1zM50 38h1v1h-1zM52 38h5v1h-5zM0 39h5v1h-5zM7 39h3v1h-3zM12 39h6v1h-6zM19 39h3v1h-3zM23 39h1v1h-1zM26 39h3v1h-3zM30 39h2v1h-2zM33 39h2v1h-2zM39 39h1v1h-1zM41 39h1v1h-1zM43 39h1v1h-1zM45 39h4v1h-4zM50 39h1v1h-1zM54 39h3v1h-3zM1 40h1v1h-1zM3 40h6v1h-6zM14 40h3v1h-3zM19 40h1v1h-1zM26 40h1v1h-1zM29 40h1v1h-1zM31 40h1v1h-1zM33 40h5v1h-5zM40 40h1v1h-1zM42 40h1v1h-1zM47 40h1v1h-1zM50 40h1v1h-1zM54 40h1v1h-1zM56 40h1v1h-1zM2 41h2v1h-2zM6 41h1v1h-1zM8 41h1v1h-1zM12 41h1v1h-1zM15 41h3v1h-3zM19 41h3v1h-3zM27 41h3v1h-3zM32 41h3v1h-3zM37 41h1v1h-1zM42 41h1v1h-1zM44 41h1v1h-1zM46 41h1v1h-1zM50 41h2v1h-2zM54 41h1v1h-1zM56 41h1v1h-1zM0 42h2v1h-2zM8 42h1v1h-1zM15 42h2v1h-2zM20 42h2v1h-2zM23 42h1v1h-1zM25 42h1v1h-1zM27 42h1v1h-1zM29 42h2v1h-2zM32 42h1v1h-1zM34 42h6v1h-6zM41 42h2v1h-2zM44 42h3v1h-3zM54 42h3v1h-3zM3 43h1v1h-1zM5 43h1v1h-1zM8 43h2v1h-2zM12 43h4v1h-4zM19 43h4v1h-4zM27 43h2v1h-2zM31 43h1v1h-1zM33 43h1v1h-1zM35 43h2v1h-2zM38 43h1v1h-1zM42 43h2v1h-2zM45 43h2v1h-2zM54 43h3v1h-3zM3 44h1v1h-1zM6 44h4v1h-4zM12 44h1v1h-1zM15 44h1v1h-1zM17 44h2v1h-2zM21 44h1v1h-1zM23 44h2v1h-2zM26 44h1v1h-1zM29 44h3v1h-3zM34 44h1v1h-1zM36 44h1v1h-1zM39 44h2v1h-2zM42 44h7v1h-7zM51 44h1v1h-1zM53 44h1v1h-1zM0 45h1v1h-1zM2 45h1v1h-1zM4 45h1v1h-1zM6 45h1v1h-1zM10 45h3v1h-3zM15 45h3v1h-3zM20 45h1v1h-1zM25 45h2v1h-2zM40 45h1v1h-1zM42 45h1v1h-1zM46 45h1v1h-1zM49 45h1v1h-1zM52 45h3v1h-3zM56 45h1v1h-1zM3 46h1v1h-1zM6 46h4v1h-4zM12 46h1v1h-1zM14 46h2v1h-2zM19 46h1v1h-1zM22 46h4v1h-4zM28 46h1v1h-1zM30 46h1v1h-1zM32 46h3v1h-3zM37 46h1v1h-1zM39 46h1v1h-1zM43 46h1v1h-1zM45 46h1v1h-1zM49 46h3v1h-3zM53 46h1v1h-1zM55 46h1v1h-1zM2 47h2v1h-2zM7 47h1v1h-1zM12 47h1v1h-1zM21 47h3v1h-3zM25 47h1v1h-1zM27 47h1v1h-1zM29 47h1v1h-1zM31 47h1v1h-1zM37 47h2v1h-2zM41 47h1v1h-1zM43 47h4v1h-4zM48 47h2v1h-2zM56 47h1v1h-1zM1 48h4v1h-4zM6 48h4v1h-4zM11 48h1v1h-1zM13 48h1v1h-1zM15 48h4v1h-4zM20 48h5v1h-5zM27 48h2v1h-2zM31 48h1v1h-1zM34 48h1v1h-1zM38 48h2v1h-2zM42 48h1v1h-1zM44 48h1v1h-1zM47 48h1v1h-1zM53 48h4v1h-4zM10 49h4v1h-4zM15 49h1v1h-1zM17 49h3v1h-3zM21 49h3v1h-3zM25 49h1v1h-1zM27 49h1v1h-1zM29 49h3v1h-3zM35 49h3v1h-3zM39 49h2v1h-2zM44 49h1v1h-1zM46 49h1v1h-1zM49 49h2v1h-2zM52 49h2v1h-2zM56 49h1v1h-1zM0 50h7v1h-7zM8 50h3v1h-3zM12 50h1v1h-1zM15 50h5v1h-5zM21 50h3v1h-3zM25 50h2v1h-2zM29 50h2v1h-2zM37 50h1v1h-1zM44 50h1v1h-1zM46 50h2v1h-2zM51 50h3v1h-3zM0 51h1v1h-1zM6 51h1v1h-1zM8 51h5v1h-5zM14 51h1v1h-1zM16 51h2v1h-2zM21 51h2v1h-2zM27 51h4v1h-4zM32 51h2v1h-2zM36 51h1v1h-1zM38 51h1v1h-1zM40 51h4v1h-4zM45 51h3v1h-3zM49 51h1v1h-1zM51 51h2v1h-2zM54 51h1v1h-1zM56 51h1v1h-1zM0 52h1v1h-1zM2 52h3v1h-3zM6 52h1v1h-1zM8 52h1v1h-1zM10 52h3v1h-3zM14 52h2v1h-2zM18 52h5v1h-5zM26 52h1v1h-1zM28 52h2v1h-2zM31 52h2v1h-2zM34 52h3v1h-3zM38 52h1v1h-1zM40 52h1v1h-1zM42 52h1v1h-1zM48 52h1v1h-1zM51 52h2v1h-2zM0 53h1v1h-1zM2 53h3v1h-3zM6 53h1v1h-1zM8 53h1v1h-1zM10 53h1v1h-1zM13 53h2v1h-2zM18 53h3v1h-3zM22 53h2v1h-2zM26 53h1v1h-1zM29 53h4v1h-4zM35 53h2v1h-2zM39 53h1v1h-1zM42 53h3v1h-3zM46 53h2v1h-2zM50 53h2v1h-2zM53 53h4v1h-4zM0 54h1v1h-1zM2 54h3v1h-3zM6 54h1v1h-1zM8 54h3v1h-3zM13 54h3v1h-3zM18 54h9v1h-9zM30 54h1v1h-1zM32 54h4v1h-4zM37 54h2v1h-2zM40 54h1v1h-1zM42 54h1v1h-1zM44 54h1v1h-1zM46 54h6v1h-6zM56 54h1v1h-1zM0 55h1v1h-1zM6 55h1v1h-1zM8 55h1v1h-1zM10 55h1v1h-1zM12 55h1v1h-1zM14 55h1v1h-1zM16 55h4v1h-4zM22 55h1v1h-1zM24 55h5v1h-5zM30 55h4v1h-4zM35 55h3v1h-3zM40 55h2v1h-2zM43 55h1v1h-1zM45 55h2v1h-2zM49 55h1v1h-1zM54 55h3v1h-3zM0 56h7v1h-7zM10 56h2v1h-2zM13 56h1v1h-1zM16 56h2v1h-2zM19 56h1v1h-1zM27 56h1v1h-1zM29 56h2v1h-2zM32 56h1v1h-1zM35 56h2v1h-2zM38 56h1v1h-1zM40 56h1v1h-1zM42 56h1v1h-1zM45 56h5v1h-5z" fill="#000"/></g><text x="29.5" y="91" font-family="Liberation Sans,sans-serif" font-size="6.4" fill="#c01818">Scan me !</text><text x="35" y="99.2" font-family="Liberation Sans,sans-serif" font-size="6" fill="#e8e8e8">www.datacrow.net</text><path d="M29 92.5 H70" stroke="#e02020" stroke-width=".6" stroke-dasharray="1 1"/><ellipse cx="20" cy="107.5" rx="8" ry="1.6" fill="#000" opacity=".25"/><g transform="rotate(-24 17 90)"><rect x="8.6" y="72.5" width="17.4" height="33" rx="3" fill="#3c3c3c" stroke="#1e1e1e" stroke-width=".8"/><rect x="10.4" y="77" width="13.8" height="21.6" fill="#2c5aa8"/><rect x="11.8" y="78.6" width="11" height="9.6" fill="#f4f4f4"/><path d="M12.6 79.4h3v3h-3z M19 79.4h3v3h-3z M12.6 84.6h3v3h-3z M16.4 81h2v2h-2z M18 84h3v1.6h-3z M16 86h2v1.6h-2z" fill="#111"/><rect x="11.6" y="90" width="5" height="3" fill="#b8c8e0"/><rect x="18" y="90" width="5" height="3" fill="#b8c8e0"/><rect x="11.6" y="94.4" width="5" height="3" fill="#b8c8e0"/><rect x="18" y="94.4" width="5" height="3" fill="#b8c8e0"/><circle cx="17.3" cy="102" r="1.2" fill="#888"/></g></g></svg>
<svg style="left:1850px;top:642px" width="70" height="116" viewBox="0 0 70 116"><rect width="70" height="116" fill="#fff"/><g transform="translate(-0.2 -0.8) scale(1.02)"><path d="M10 18 Q10 4.8 23 4.8 H80 V11.6 H24 Q16.8 11.6 16.8 19 V87 Q16.8 93.5 24 93.5 H80 V100.4 H23 Q10 100.4 10 88Z" fill="#808080"/><text x="29" y="10.6" font-family="Liberation Sans,sans-serif" font-weight="bold" font-size="6.2" fill="#e8e8e8">Inventar Nr.</text><text x="31" y="21" font-family="Liberation Sans,sans-serif" font-size="9" fill="#222">Cocktail-Set</text><g transform="translate(23.2 24.8) scale(1.742)"><path d="M0 0h7v1h-7zM8 0h1v1h-1zM10 0h1v1h-1zM13 0h1v1h-1zM15 0h3v1h-3zM19 0h1v1h-1zM22 0h1v1h-1zM26 0h7v1h-7zM0 1h1v1h-1zM6 1h1v1h-1zM9 1h2v1h-2zM12 1h1v1h-1zM17 1h2v1h-2zM20 1h4v1h-4zM26 1h1v1h-1zM32 1h1v1h-1zM0 2h1v1h-1zM2 2h3v1h-3zM6 2h1v1h-1zM8 2h3v1h-3zM15 2h1v1h-1zM18 2h3v1h-3zM22 2h3v1h-3zM26 2h1v1h-1zM28 2h3v1h-3zM32 2h1v1h-1zM0 3h1v1h-1zM2 3h3v1h-3zM6 3h1v1h-1zM8 3h4v1h-4zM15 3h2v1h-2zM18 3h2v1h-2zM22 3h1v1h-1zM26 3h1v1h-1zM28 3h3v1h-3zM32 3h1v1h-1zM0 4h1v1h-1zM2 4h3v1h-3zM6 4h1v1h-1zM10 4h1v1h-1zM12 4h1v1h-1zM15 4h1v1h-1zM18 4h1v1h-1zM22 4h3v1h-3zM26 4h1v1h-1zM28 4h3v1h-3zM32 4h1v1h-1zM0 5h1v1h-1zM6 5h1v1h-1zM9 5h3v1h-3zM13 5h3v1h-3zM18 5h1v1h-1zM20 5h2v1h-2zM23 5h1v1h-1zM26 5h1v1h-1zM32 5h1v1h-1zM0 6h7v1h-7zM9 6h1v1h-1zM11 6h3v1h-3zM15 6h6v1h-6zM22 6h1v1h-1zM24 6h1v1h-1zM26 6h7v1h-7zM9 7h1v1h-1zM11 7h1v1h-1zM13 7h1v1h-1zM15 7h3v1h-3zM20 7h2v1h-2zM0 8h1v1h-1zM2 8h3v1h-3zM10 8h3v1h-3zM18 8h3v1h-3zM23 8h3v1h-3zM27 8h2v1h-2zM32 8h1v1h-1zM1 9h1v1h-1zM6 9h4v1h-4zM11 9h2v1h-2zM14 9h3v1h-3zM19 9h1v1h-1zM22 9h1v1h-1zM24 9h1v1h-1zM27 9h3v1h-3zM0 10h9v1h-9zM11 10h2v1h-2zM16 10h1v1h-1zM21 10h5v1h-5zM27 10h1v1h-1zM31 10h1v1h-1zM0 11h1v1h-1zM2 11h1v1h-1zM5 11h6v1h-6zM13 11h2v1h-2zM16 11h2v1h-2zM20 11h1v1h-1zM23 11h1v1h-1zM25 11h1v1h-1zM27 11h1v1h-1zM32 11h1v1h-1zM1 12h2v1h-2zM5 12h4v1h-4zM10 12h1v1h-1zM14 12h2v1h-2zM17 12h1v1h-1zM20 12h2v1h-2zM24 12h1v1h-1zM26 12h2v1h-2zM30 12h3v1h-3zM1 13h2v1h-2zM5 13h1v1h-1zM14 13h4v1h-4zM19 13h3v1h-3zM24 13h1v1h-1zM26 13h1v1h-1zM30 13h3v1h-3zM0 14h2v1h-2zM5 14h2v1h-2zM9 14h1v1h-1zM11 14h1v1h-1zM15 14h1v1h-1zM17 14h1v1h-1zM19 14h1v1h-1zM23 14h1v1h-1zM28 14h1v1h-1zM30 14h3v1h-3zM0 15h1v1h-1zM5 15h1v1h-1zM10 15h4v1h-4zM15 15h1v1h-1zM17 15h2v1h-2zM23 15h2v1h-2zM27 15h2v1h-2zM30 15h1v1h-1zM32 15h1v1h-1zM2 16h2v1h-2zM6 16h1v1h-1zM9 16h3v1h-3zM14 16h4v1h-4zM19 16h1v1h-1zM21 16h1v1h-1zM26 16h1v1h-1zM28 16h1v1h-1zM30 16h3v1h-3zM2 17h1v1h-1zM4 17h1v1h-1zM6 17h4v1h-4zM14 17h4v1h-4zM23 17h1v1h-1zM26 17h1v1h-1zM31 17h2v1h-2zM4 18h1v1h-1zM7 18h2v1h-2zM10 18h1v1h-1zM13 18h1v1h-1zM18 18h4v1h-4zM27 18h1v1h-1zM29 18h1v1h-1zM32 18h1v1h-1zM1 19h1v1h-1zM10 19h4v1h-4zM15 19h1v1h-1zM18 19h6v1h-6zM25 19h1v1h-1zM27 19h1v1h-1zM29 19h1v1h-1zM2 20h1v1h-1zM5 20h1v1h-1zM7 20h2v1h-2zM12 20h2v1h-2zM16 20h1v1h-1zM18 20h2v1h-2zM23 20h2v1h-2zM27 20h2v1h-2zM30 20h2v1h-2zM2 21h2v1h-2zM5 21h2v1h-2zM8 21h2v1h-2zM11 21h1v1h-1zM13 21h3v1h-3zM17 21h1v1h-1zM20 21h1v1h-1zM22 21h1v1h-1zM25 21h2v1h-2zM2 22h1v1h-1zM4 22h4v1h-4zM15 22h1v1h-1zM17 22h1v1h-1zM19 22h1v1h-1zM23 22h1v1h-1zM25 22h2v1h-2zM28 22h1v1h-1zM0 23h1v1h-1zM2 23h3v1h-3zM6 23h1v1h-1zM8 23h1v1h-1zM10 23h2v1h-2zM13 23h3v1h-3zM22 23h3v1h-3zM27 23h2v1h-2zM30 23h1v1h-1zM32 23h1v1h-1zM0 24h1v1h-1zM3 24h1v1h-1zM6 24h1v1h-1zM8 24h1v1h-1zM10 24h1v1h-1zM12 24h2v1h-2zM15 24h3v1h-3zM19 24h4v1h-4zM24 24h1v1h-1zM27 24h1v1h-1zM29 24h1v1h-1zM31 24h2v1h-2zM8 25h2v1h-2zM12 25h1v1h-1zM14 25h3v1h-3zM18 25h6v1h-6zM25 25h4v1h-4zM30 25h3v1h-3zM0 26h7v1h-7zM9 26h3v1h-3zM13 26h2v1h-2zM18 26h1v1h-1zM21 26h1v1h-1zM23 26h2v1h-2zM0 27h1v1h-1zM6 27h1v1h-1zM8 27h1v1h-1zM10 27h1v1h-1zM12 27h2v1h-2zM15 27h1v1h-1zM17 27h1v1h-1zM19 27h2v1h-2zM24 27h1v1h-1zM26 27h2v1h-2zM30 27h3v1h-3zM0 28h1v1h-1zM2 28h3v1h-3zM6 28h1v1h-1zM8 28h2v1h-2zM11 28h1v1h-1zM13 28h7v1h-7zM23 28h3v1h-3zM27 28h3v1h-3zM31 28h1v1h-1zM0 29h1v1h-1zM2 29h3v1h-3zM6 29h1v1h-1zM11 29h2v1h-2zM16 29h1v1h-1zM18 29h2v1h-2zM21 29h4v1h-4zM27 29h2v1h-2zM0 30h1v1h-1zM2 30h3v1h-3zM6 30h1v1h-1zM9 30h1v1h-1zM12 30h3v1h-3zM16 30h1v1h-1zM18 30h2v1h-2zM21 30h1v1h-1zM25 30h1v1h-1zM27 30h2v1h-2zM30 30h1v1h-1zM32 30h1v1h-1zM0 31h1v1h-1zM6 31h1v1h-1zM8 31h3v1h-3zM12 31h2v1h-2zM16 31h2v1h-2zM19 31h1v1h-1zM21 31h2v1h-2zM24 31h1v1h-1zM27 31h1v1h-1zM29 31h3v1h-3zM0 32h7v1h-7zM8 32h2v1h-2zM12 32h2v1h-2zM15 32h2v1h-2zM18 32h2v1h-2zM25 32h1v1h-1zM27 32h1v1h-1zM31 32h1v1h-1z" fill="#000"/></g><text x="29.5" y="91" font-family="Liberation Sans,sans-serif" font-size="6.4" fill="#c01818">Scan me !</text><text x="35" y="99.2" font-family="Liberation Sans,sans-serif" font-size="6" fill="#e8e8e8">www.datacrow.net</text><path d="M29 92.5 H70" stroke="#e02020" stroke-width=".6" stroke-dasharray="1 1"/><ellipse cx="20" cy="107.5" rx="8" ry="1.6" fill="#000" opacity=".25"/><g transform="rotate(-24 17 90)"><rect x="8.6" y="72.5" width="17.4" height="33" rx="3" fill="#3c3c3c" stroke="#1e1e1e" stroke-width=".8"/><rect x="10.4" y="77" width="13.8" height="21.6" fill="#2c5aa8"/><rect x="11.8" y="78.6" width="11" height="9.6" fill="#f4f4f4"/><path d="M12.6 79.4h3v3h-3z M19 79.4h3v3h-3z M12.6 84.6h3v3h-3z M16.4 81h2v2h-2z M18 84h3v1.6h-3z M16 86h2v1.6h-2z" fill="#111"/><rect x="11.6" y="90" width="5" height="3" fill="#b8c8e0"/><rect x="18" y="90" width="5" height="3" fill="#b8c8e0"/><rect x="11.6" y="94.4" width="5" height="3" fill="#b8c8e0"/><rect x="18" y="94.4" width="5" height="3" fill="#b8c8e0"/><circle cx="17.3" cy="102" r="1.2" fill="#888"/></g></g></svg>
<svg style="left:1850px;top:767px" width="70" height="116" viewBox="0 0 70 116"><rect width="70" height="116" fill="#fff"/><g transform="translate(-2.75 -0.7) scale(1)"><path d="M10 18 Q10 4.8 23 4.8 H80 V11.6 H24 Q16.8 11.6 16.8 19 V87 Q16.8 93.5 24 93.5 H80 V100.4 H23 Q10 100.4 10 88Z" fill="#808080"/><text x="29" y="10.6" font-family="Liberation Sans,sans-serif" font-weight="bold" font-size="6.2" fill="#e8e8e8">Inventar Nr.</text><text x="31" y="21" font-family="Liberation Sans,sans-serif" font-size="9" fill="#222">Kühlschrank</text><g transform="translate(23.2 24.8) scale(1.742)"><path d="M0 0h7v1h-7zM8 0h1v1h-1zM10 0h2v1h-2zM13 0h2v1h-2zM18 0h1v1h-1zM26 0h7v1h-7zM0 1h1v1h-1zM6 1h1v1h-1zM8 1h1v1h-1zM12 1h1v1h-1zM15 1h2v1h-2zM22 1h1v1h-1zM26 1h1v1h-1zM32 1h1v1h-1zM0 2h1v1h-1zM2 2h3v1h-3zM6 2h1v1h-1zM8 2h2v1h-2zM11 2h6v1h-6zM18 2h1v1h-1zM20 2h1v1h-1zM23 2h2v1h-2zM26 2h1v1h-1zM28 2h3v1h-3zM32 2h1v1h-1zM0 3h1v1h-1zM2 3h3v1h-3zM6 3h1v1h-1zM8 3h1v1h-1zM11 3h2v1h-2zM17 3h3v1h-3zM22 3h1v1h-1zM26 3h1v1h-1zM28 3h3v1h-3zM32 3h1v1h-1zM0 4h1v1h-1zM2 4h3v1h-3zM6 4h1v1h-1zM8 4h1v1h-1zM10 4h2v1h-2zM13 4h3v1h-3zM19 4h1v1h-1zM23 4h2v1h-2zM26 4h1v1h-1zM28 4h3v1h-3zM32 4h1v1h-1zM0 5h1v1h-1zM6 5h1v1h-1zM11 5h1v1h-1zM14 5h4v1h-4zM20 5h2v1h-2zM23 5h2v1h-2zM26 5h1v1h-1zM32 5h1v1h-1zM0 6h7v1h-7zM8 6h2v1h-2zM11 6h1v1h-1zM13 6h1v1h-1zM15 6h1v1h-1zM17 6h1v1h-1zM19 6h3v1h-3zM24 6h1v1h-1zM26 6h7v1h-7zM10 7h1v1h-1zM12 7h4v1h-4zM17 7h1v1h-1zM20 7h2v1h-2zM23 7h2v1h-2zM0 8h1v1h-1zM2 8h1v1h-1zM5 8h3v1h-3zM9 8h3v1h-3zM13 8h1v1h-1zM15 8h1v1h-1zM18 8h1v1h-1zM20 8h3v1h-3zM25 8h1v1h-1zM29 8h2v1h-2zM32 8h1v1h-1zM0 9h2v1h-2zM7 9h2v1h-2zM11 9h1v1h-1zM13 9h1v1h-1zM16 9h1v1h-1zM19 9h1v1h-1zM22 9h5v1h-5zM28 9h1v1h-1zM31 9h1v1h-1zM2 10h2v1h-2zM6 10h5v1h-5zM12 10h1v1h-1zM14 10h1v1h-1zM18 10h1v1h-1zM22 10h2v1h-2zM25 10h4v1h-4zM1 11h2v1h-2zM5 11h3v1h-3zM9 11h1v1h-1zM13 11h1v1h-1zM15 11h2v1h-2zM18 11h1v1h-1zM20 11h4v1h-4zM27 11h2v1h-2zM30 11h1v1h-1zM0 12h1v1h-1zM2 12h1v1h-1zM5 12h4v1h-4zM10 12h1v1h-1zM12 12h1v1h-1zM18 12h1v1h-1zM21 12h1v1h-1zM23 12h2v1h-2zM26 12h1v1h-1zM29 12h1v1h-1zM32 12h1v1h-1zM0 13h1v1h-1zM2 13h3v1h-3zM7 13h1v1h-1zM9 13h3v1h-3zM13 13h1v1h-1zM15 13h3v1h-3zM19 13h7v1h-7zM29 13h4v1h-4zM1 14h1v1h-1zM3 14h1v1h-1zM5 14h1v1h-1zM9 14h1v1h-1zM11 14h1v1h-1zM13 14h1v1h-1zM16 14h1v1h-1zM20 14h4v1h-4zM25 14h3v1h-3zM31 14h1v1h-1zM3 15h2v1h-2zM7 15h2v1h-2zM13 15h2v1h-2zM16 15h4v1h-4zM21 15h1v1h-1zM24 15h1v1h-1zM26 15h4v1h-4zM31 15h1v1h-1zM0 16h2v1h-2zM3 16h1v1h-1zM6 16h5v1h-5zM12 16h1v1h-1zM15 16h1v1h-1zM17 16h1v1h-1zM21 16h3v1h-3zM25 16h7v1h-7zM4 17h1v1h-1zM8 17h2v1h-2zM12 17h1v1h-1zM17 17h2v1h-2zM23 17h3v1h-3zM27 17h1v1h-1zM2 18h2v1h-2zM8 18h3v1h-3zM18 18h3v1h-3zM23 18h1v1h-1zM25 18h1v1h-1zM28 18h4v1h-4zM0 19h2v1h-2zM3 19h1v1h-1zM14 19h2v1h-2zM17 19h1v1h-1zM20 19h5v1h-5zM29 19h2v1h-2zM1 20h1v1h-1zM3 20h8v1h-8zM12 20h4v1h-4zM18 20h1v1h-1zM20 20h7v1h-7zM28 20h2v1h-2zM31 20h2v1h-2zM0 21h1v1h-1zM2 21h2v1h-2zM5 21h2v1h-2zM8 21h6v1h-6zM15 21h2v1h-2zM18 21h3v1h-3zM22 21h2v1h-2zM26 21h2v1h-2zM29 21h3v1h-3zM0 22h1v1h-1zM4 22h1v1h-1zM6 22h1v1h-1zM9 22h1v1h-1zM11 22h1v1h-1zM13 22h3v1h-3zM17 22h5v1h-5zM24 22h1v1h-1zM27 22h1v1h-1zM31 22h2v1h-2zM3 23h1v1h-1zM5 23h4v1h-4zM11 23h1v1h-1zM13 23h5v1h-5zM20 23h2v1h-2zM24 23h1v1h-1zM26 23h1v1h-1zM29 23h4v1h-4zM0 24h5v1h-5zM6 24h3v1h-3zM11 24h1v1h-1zM14 24h2v1h-2zM17 24h1v1h-1zM19 24h1v1h-1zM25 24h3v1h-3zM29 24h1v1h-1zM31 24h2v1h-2zM8 25h2v1h-2zM11 25h2v1h-2zM14 25h2v1h-2zM17 25h3v1h-3zM21 25h1v1h-1zM26 25h1v1h-1zM29 25h3v1h-3zM0 26h7v1h-7zM9 26h4v1h-4zM14 26h1v1h-1zM16 26h6v1h-6zM23 26h1v1h-1zM27 26h2v1h-2zM30 26h1v1h-1zM0 27h1v1h-1zM6 27h1v1h-1zM11 27h1v1h-1zM16 27h5v1h-5zM22 27h1v1h-1zM25 27h1v1h-1zM28 27h1v1h-1zM31 27h1v1h-1zM0 28h1v1h-1zM2 28h3v1h-3zM6 28h1v1h-1zM8 28h1v1h-1zM10 28h4v1h-4zM15 28h2v1h-2zM19 28h1v1h-1zM22 28h1v1h-1zM24 28h3v1h-3zM30 28h1v1h-1zM32 28h1v1h-1zM0 29h1v1h-1zM2 29h3v1h-3zM6 29h1v1h-1zM8 29h1v1h-1zM12 29h1v1h-1zM14 29h2v1h-2zM22 29h2v1h-2zM25 29h2v1h-2zM29 29h1v1h-1zM31 29h2v1h-2zM0 30h1v1h-1zM2 30h3v1h-3zM6 30h1v1h-1zM10 30h3v1h-3zM14 30h1v1h-1zM18 30h2v1h-2zM22 30h2v1h-2zM25 30h1v1h-1zM29 30h1v1h-1zM0 31h1v1h-1zM6 31h1v1h-1zM9 31h1v1h-1zM13 31h2v1h-2zM17 31h1v1h-1zM19 31h1v1h-1zM23 31h2v1h-2zM27 31h1v1h-1zM29 31h1v1h-1zM32 31h1v1h-1zM0 32h7v1h-7zM8 32h4v1h-4zM14 32h1v1h-1zM19 32h2v1h-2zM24 32h2v1h-2zM27 32h3v1h-3zM32 32h1v1h-1z" fill="#000"/></g><text x="29.5" y="91" font-family="Liberation Sans,sans-serif" font-size="6.4" fill="#c01818">Scan me !</text><text x="35" y="99.2" font-family="Liberation Sans,sans-serif" font-size="6" fill="#e8e8e8">www.datacrow.net</text><path d="M29 92.5 H70" stroke="#e02020" stroke-width=".6" stroke-dasharray="1 1"/><ellipse cx="20" cy="107.5" rx="8" ry="1.6" fill="#000" opacity=".25"/><g transform="rotate(-24 17 90)"><rect x="8.6" y="72.5" width="17.4" height="33" rx="3" fill="#3c3c3c" stroke="#1e1e1e" stroke-width=".8"/><rect x="10.4" y="77" width="13.8" height="21.6" fill="#2c5aa8"/><rect x="11.8" y="78.6" width="11" height="9.6" fill="#f4f4f4"/><path d="M12.6 79.4h3v3h-3z M19 79.4h3v3h-3z M12.6 84.6h3v3h-3z M16.4 81h2v2h-2z M18 84h3v1.6h-3z M16 86h2v1.6h-2z" fill="#111"/><rect x="11.6" y="90" width="5" height="3" fill="#b8c8e0"/><rect x="18" y="90" width="5" height="3" fill="#b8c8e0"/><rect x="11.6" y="94.4" width="5" height="3" fill="#b8c8e0"/><rect x="18" y="94.4" width="5" height="3" fill="#b8c8e0"/><circle cx="17.3" cy="102" r="1.2" fill="#888"/></g></g></svg>
<!-- ===== scrollbars + status ===== -->
<div class="a" style="left:1907px;top:90px;width:13px;height:953px;background:#f2f1f0"></div>
<div class="a" style="left:1907px;top:90px;width:13px;height:953px;border:1px solid #b5b1ac;border-radius:7px;box-sizing:border-box;background:#f7f7f6"></div>
<div class="a" style="left:1908px;top:103px;width:11px;height:926px;border-radius:6px;background:linear-gradient(90deg,#cfcdca,#dad8d5 40%,#e4e2df)"></div>
<div class="a" style="left:1907px;top:103px;width:13px;height:686px;border:1px solid #8d8984;border-radius:7px;box-sizing:border-box;background:linear-gradient(90deg,#fbfbfa,#f3f2f0 55%,#e4e2df)"></div>
<svg style="left:1909px;top:94px" width="9" height="6" viewBox="0 0 9 6"><path d="M4.6 1.4 L7.4 4.8 H1.8Z" fill="#8a8884"/></svg>
<svg style="left:1909px;top:1033px" width="9" height="6" viewBox="0 0 9 6"><path d="M4.6 4.2 L7.4 .8 H1.8Z" fill="#4a4a48"/></svg>
<svg style="left:1910px;top:442px" width="7" height="8" viewBox="0 0 7 8"><path d="M0 1.5 H7 M0 4 H7 M0 6.5 H7" stroke="#aaa6a0" stroke-width="1"/></svg>
<!-- hscroll -->
<div class="a" style="left:0;top:1043px;width:1920px;height:14px;background:#f2f1f0"></div>
<div class="a" style="left:0;top:1043px;width:1907px;height:13px;border:1px solid #b5b1ac;border-radius:7px;box-sizing:border-box;background:#f7f7f6"></div>
<div class="a" style="left:13px;top:1044px;width:1880px;height:11px;border-radius:6px;background:linear-gradient(#cfcdca,#dad8d5 40%,#e4e2df)"></div>
<div class="a" style="left:13px;top:1043px;width:1331px;height:13px;border:1px solid #8d8984;border-radius:7px;box-sizing:border-box;background:linear-gradient(#fdfdfc,#f3f2f0 55%,#e4e2df)"></div>
<svg style="left:4px;top:1045px" width="6" height="9" viewBox="0 0 6 9"><path d="M1.6 4.5 L4.8 1.6 V7.4Z" fill="#8a8884"/></svg>
<svg style="left:1898px;top:1045px" width="6" height="9" viewBox="0 0 6 9"><path d="M4.2 4.5 L1 1.6 V7.4Z" fill="#4a4a48"/></svg>
<svg style="left:673px;top:1047px" width="9" height="5" viewBox="0 0 9 5"><path d="M1.5 0 V5 M4.5 0 V5 M7.5 0 V5" stroke="#aaa6a0" stroke-width="1"/></svg>
<!-- status/addon bar -->
<div class="a" style="left:0;top:1056px;width:1920px;height:24px;background:#f2f1f0;border-top:1px solid #c4c1bd;box-sizing:border-box"></div>
<svg style="left:7px;top:1061px" width="14" height="14" viewBox="0 0 14 14"><path d="M2.6 2.6 L11.4 11.4 M11.4 2.6 L2.6 11.4" stroke="#55534f" stroke-width="3.6" stroke-linecap="square"/></svg>
<div class="a ui" style="left:1865px;top:1058px;font-size:16.5px;line-height:18px;color:#222;letter-spacing:.2px"><span style="color:#b01818">z</span>otero</div>
</div></body></html>
